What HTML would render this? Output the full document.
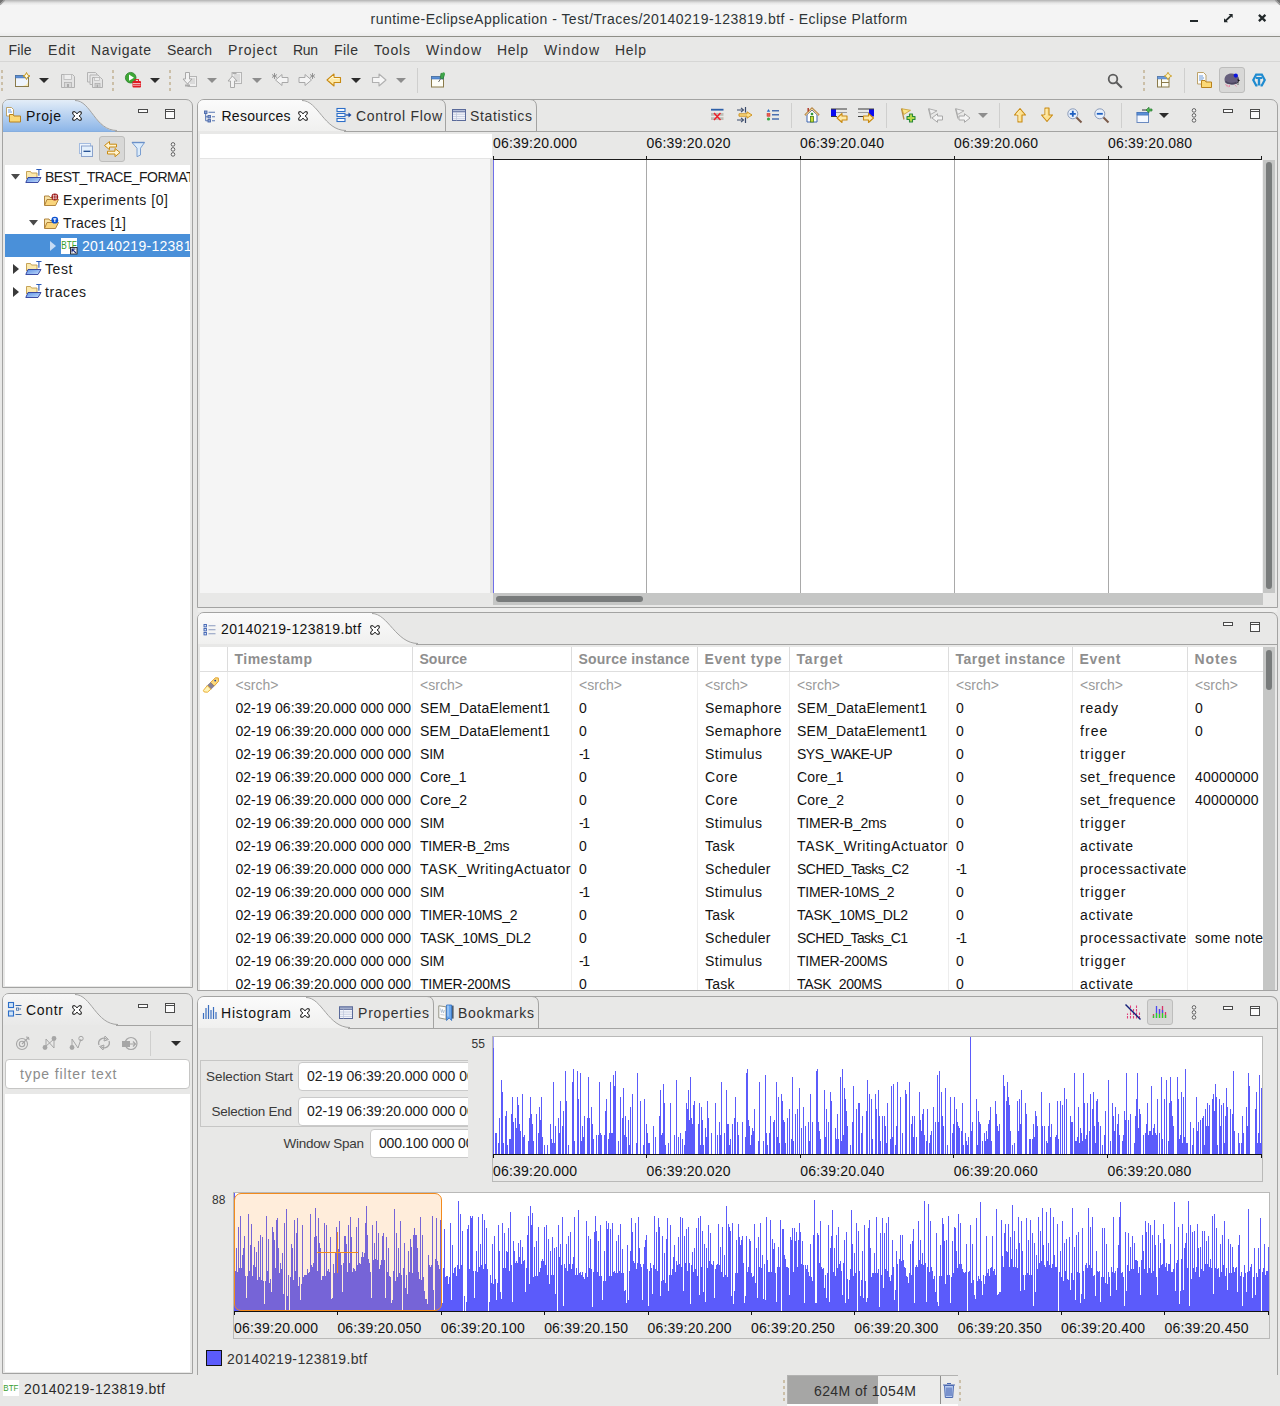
<!DOCTYPE html>
<html><head><meta charset="utf-8"><title>Eclipse</title>
<style>
*{box-sizing:border-box;margin:0;padding:0}
html,body{width:1280px;height:1406px;overflow:hidden;background:#e8e8e7;font-family:"Liberation Sans",sans-serif;font-size:14px;color:#1a1a1a}
.abs{position:absolute}
.t{position:absolute;white-space:nowrap;font-family:"Liberation Sans",sans-serif}
svg{position:absolute;overflow:visible}
</style></head><body>
<div class="abs" style="left:0;top:0;width:1280px;height:36px;background:linear-gradient(#b2b2b2 0,#cdcdcd 1.500px,#e6e6e6 3px,#f4f4f4 5.500px,#f4f4f4 32px,#ececec 36px)"></div>
<svg style="left:0px;top:0px" width="6" height="6" viewBox="0 0 6 6"><path d="M0 0h4L0 4z" fill="#727272"/><path d="M4.800 0L0 4.800" stroke="#9c9c9c" stroke-width="1.200"/></svg>
<svg style="left:1274px;top:0px" width="6" height="6" viewBox="0 0 6 6"><path d="M6 0H2l4 4z" fill="#727272"/><path d="M1.200 0L6 4.800" stroke="#9c9c9c" stroke-width="1.200"/></svg>
<div class="abs" style="left:0px;top:36px;width:1280px;height:1px;background:#8f8f88;"></div>
<div class="t" style="left:370.50px;top:11.00px;font-size:14.00px;line-height:16px;letter-spacing:0.474px;color:#2e3436;">runtime-EclipseApplication - Test/Traces/20140219-123819.btf - Eclipse Platform</div>
<div class="abs" style="left:1190px;top:19.5px;width:8px;height:2.5px;background:#22282a;"></div>
<svg style="left:1223.5px;top:13.7px" width="8.7" height="8.3" viewBox="0 0 8.7 8.3"><path d="M4.600 0H8.700v4.100zM4.100 8.300H0V4.200z" fill="#22282a"/><path d="M7 1.700L1.700 6.600" stroke="#22282a" stroke-width="1.900"/></svg>
<svg style="left:1257.7px;top:14px" width="8.3" height="8" viewBox="0 0 8.3 8"><path d="M.9 .9l6.500 6.200M7.400 .9L.9 7.100" stroke="#22282a" stroke-width="2.300"/></svg>
<div class="abs" style="left:0px;top:37px;width:1280px;height:25px;background:#e8e8e7;"></div>
<div class="abs" style="left:0px;top:61px;width:1280px;height:1px;background:#d6d6d5;"></div>
<div class="t" style="left:8.50px;top:42.00px;font-size:14.00px;line-height:16px;letter-spacing:0.147px;color:#333;">File</div>
<div class="t" style="left:48.00px;top:42.00px;font-size:14.00px;line-height:16px;letter-spacing:0.959px;color:#333;">Edit</div>
<div class="t" style="left:91.00px;top:42.00px;font-size:14.00px;line-height:16px;letter-spacing:0.678px;color:#333;">Navigate</div>
<div class="t" style="left:167.00px;top:42.00px;font-size:14.00px;line-height:16px;letter-spacing:0.129px;color:#333;">Search</div>
<div class="t" style="left:228.00px;top:42.00px;font-size:14.00px;line-height:16px;letter-spacing:0.905px;color:#333;">Project</div>
<div class="t" style="left:293.00px;top:42.00px;font-size:14.00px;line-height:16px;letter-spacing:-0.341px;color:#333;">Run</div>
<div class="t" style="left:334.00px;top:42.00px;font-size:14.00px;line-height:16px;letter-spacing:0.481px;color:#333;">File</div>
<div class="t" style="left:374.00px;top:42.00px;font-size:14.00px;line-height:16px;letter-spacing:0.830px;color:#333;">Tools</div>
<div class="t" style="left:426.00px;top:42.00px;font-size:14.00px;line-height:16px;letter-spacing:1.042px;color:#333;">Window</div>
<div class="t" style="left:497.00px;top:42.00px;font-size:14.00px;line-height:16px;letter-spacing:0.736px;color:#333;">Help</div>
<div class="t" style="left:544.00px;top:42.00px;font-size:14.00px;line-height:16px;letter-spacing:1.042px;color:#333;">Window</div>
<div class="t" style="left:615.00px;top:42.00px;font-size:14.00px;line-height:16px;letter-spacing:0.736px;color:#333;">Help</div>
<div class="abs" style="left:1px;top:70px;width:2px;height:22px;background:repeating-linear-gradient(#cbbfa8 0 3px,transparent 3px 6px)"></div>
<svg style="left:15px;top:72px" width="16" height="16" viewBox="0 0 16 16"><rect x=".5" y="3.500" width="13" height="11" fill="#eef4fd" stroke="#8a7a4a"/><path d="M13 9c0 3-3 5-7 5h7z" fill="#f6e9b8"/><rect x=".5" y="3.500" width="13" height="2.400" fill="#5a8fd6" stroke="#3f6fb5" stroke-width=".6"/><path d="M11.500 .5l1.100 2.400 2.400 1.100-2.400 1.100-1.100 2.400-1.100-2.400L8 4l2.400-1.100z" fill="#fffbe6" stroke="#c89a1e" stroke-width="1"/></svg>
<svg style="left:39px;top:78px" width="10" height="5" viewBox="0 0 10 5"><path d="M0 0H10L5 5Z" fill="#2b2b2b"/></svg>
<svg style="left:59.5px;top:72.5px" width="16" height="16" viewBox="0 0 16 16"><path d="M1.5 1.5h11l2 2v11h-13z" fill="#e4e4e4" stroke="#b0b0b0"/><rect x="4" y="1.5" width="7.5" height="5" fill="#eee" stroke="#b8b8b8" stroke-width=".8"/><rect x="4.5" y="9.5" width="7" height="5" fill="#d8d8d8" stroke="#b0b0b0" stroke-width=".8"/><rect x="7" y="11" width="2" height="3" fill="#aaa"/></svg>
<svg style="left:87px;top:72px" width="16" height="16" viewBox="0 0 16 16"><path d="M.5 .5h8l1.5 1.5v8h-9.5z" fill="#e8e8e8" stroke="#b4b4b4"/><path d="M3 3h8l1.5 1.5v8H3z" fill="#e8e8e8" stroke="#b4b4b4"/><path d="M5.5 5.500h8l2 2v8h-10z" fill="#e4e4e4" stroke="#b0b0b0"/><rect x="7.5" y="5.5" width="5" height="3" fill="#eee" stroke="#b8b8b8" stroke-width=".7"/><rect x="8" y="11.5" width="5" height="4" fill="#d5d5d5" stroke="#aaa" stroke-width=".7"/><rect x="9.6" y="12.6" width="1.6" height="2.6" fill="#a8a8a8"/></svg>
<div class="abs" style="left:112px;top:70px;width:2px;height:22px;background:repeating-linear-gradient(#cbbfa8 0 3px,transparent 3px 6px)"></div>
<svg style="left:125px;top:72px" width="16" height="16" viewBox="0 0 16 16"><circle cx="5.7" cy="5.7" r="5.3" fill="#3ea836" stroke="#2b7d2b" stroke-width=".8"/><path d="M4 2.6v6.2l5-3.100z" fill="#fff"/><rect x="7.500" y="9" width="8.5" height="6.5" rx="1" fill="#e01b24"/><rect x="10" y="7.600" width="3.500" height="2" fill="none" stroke="#e01b24" stroke-width="1"/><rect x="8" y="11.200" width="7.5" height="1" fill="#fff" opacity=".85"/><rect x="8" y="13.200" width="7.5" height=".8" fill="#fff" opacity=".6"/></svg>
<svg style="left:150px;top:78px" width="10" height="5" viewBox="0 0 10 5"><path d="M0 0H10L5 5Z" fill="#2b2b2b"/></svg>
<div class="abs" style="left:169px;top:70px;width:2px;height:22px;background:repeating-linear-gradient(#cbbfa8 0 3px,transparent 3px 6px)"></div>
<svg style="left:182px;top:72px" width="16" height="16" viewBox="0 0 16 16"><rect x="6" y="4.500" width="8.5" height="10" fill="#efefef" stroke="#b5b5b5"/><path d="M8 7h5M8 9h5M8 11h5" stroke="#bdbdbd" stroke-width=".8"/><path d="M3.500 .5h4v6.500h2.500L5.500 12 1 7h2.500z" fill="#f2f2f2" stroke="#a9a9a9"/><rect x="3" y="12.500" width="5" height="2" fill="#aaa"/></svg>
<svg style="left:207px;top:78px" width="10" height="5" viewBox="0 0 10 5"><path d="M0 0H10L5 5Z" fill="#8d8d8d"/></svg>
<svg style="left:227px;top:72px" width="16" height="16" viewBox="0 0 16 16"><rect x="5" y=".5" width="9.5" height="11" fill="#efefef" stroke="#b5b5b5"/><path d="M7 3h6M7 5h6M7 7h6M9 9h4" stroke="#bdbdbd" stroke-width=".8"/><path d="M3.500 15.500h4V9h2.500L5.500 4 1 9h2.500z" fill="#f2f2f2" stroke="#a9a9a9"/><rect x="5.500" y=".5" width="4" height="1.600" fill="#aaa"/></svg>
<svg style="left:252px;top:78px" width="10" height="5" viewBox="0 0 10 5"><path d="M0 0H10L5 5Z" fill="#8d8d8d"/></svg>
<svg style="left:272px;top:72px" width="16" height="16" viewBox="0 0 16 16"><path d="M16 5.500h-6V2.500L3.500 8l6.500 5.500v-3h6z" fill="#f4f4f4" stroke="#a8a8a8"/><path d="M2.500 1v6M0 2.500l5 3M5 2.500l-5 3" stroke="#8c8c8c" stroke-width=".9"/></svg>
<svg style="left:299px;top:72px" width="16" height="16" viewBox="0 0 16 16"><path d="M0 5.500h6V2.500L12.500 8 6 13.500v-3H0z" fill="#f4f4f4" stroke="#a8a8a8"/><path d="M13.500 1v6M11 2.500l5 3M16 2.500l-5 3" stroke="#8c8c8c" stroke-width=".9"/></svg>
<svg style="left:326px;top:72px" width="16" height="16" viewBox="0 0 16 16"><path d="M14.500 5.500H8V2L1 8l7 6v-3.500h6.500z" fill="#fde9a8" stroke="#c98a12" stroke-width="1.100" stroke-linejoin="round"/><path d="M13.500 6.500H7V4.200L2.600 8" fill="none" stroke="#fff7d8" stroke-width=".9"/></svg>
<svg style="left:351px;top:78px" width="10" height="5" viewBox="0 0 10 5"><path d="M0 0H10L5 5Z" fill="#2b2b2b"/></svg>
<svg style="left:371px;top:72px" width="16" height="16" viewBox="0 0 16 16"><path d="M1.500 5.500H8V2l7 6-7 6v-3.500H1.500z" fill="#f6f6f6" stroke="#b0b0b0" stroke-width="1.100" stroke-linejoin="round"/></svg>
<svg style="left:396px;top:78px" width="10" height="5" viewBox="0 0 10 5"><path d="M0 0H10L5 5Z" fill="#8d8d8d"/></svg>
<div class="abs" style="left:417px;top:68px;width:1px;height:25px;background:#cfcfce;"></div>
<svg style="left:430px;top:72px" width="16" height="16" viewBox="0 0 16 16"><rect x="1.500" y="4.500" width="12" height="10.500" fill="#fdfdf6" stroke="#8a7a4a"/><rect x="1.500" y="4.500" width="12" height="2.500" fill="#5a8fd6" stroke="#3f6fb5" stroke-width=".6"/><path d="M11 1.200l3.500 1.300L13 7l-2.800-.8z" fill="#3fa64a" stroke="#2a7a33" stroke-width=".7"/><path d="M10.800 6.500L8.500 10" stroke="#666" stroke-width="1"/><circle cx="13.500" cy="1.800" r="1.500" fill="#3fa64a"/></svg>
<svg style="left:1107px;top:73px" width="16" height="16" viewBox="0 0 16 16"><circle cx="6" cy="6" r="4.300" fill="none" stroke="#5c5c5c" stroke-width="1.800"/><path d="M9.300 9.300L14.800 14.800" stroke="#5c5c5c" stroke-width="2.100"/></svg>
<div class="abs" style="left:1143px;top:70px;width:2px;height:22px;background:repeating-linear-gradient(#cbbfa8 0 3px,transparent 3px 6px)"></div>
<svg style="left:1156px;top:72px" width="16" height="16" viewBox="0 0 16 16"><rect x="1.500" y="4.500" width="11.500" height="10.500" fill="#fbfbf2" stroke="#8a7a4a"/><rect x="1.500" y="4.500" width="11.500" height="2.400" fill="#6a9bdc" stroke="#4a78bd" stroke-width=".6"/><path d="M5.500 7v8M5.500 10.500H13" stroke="#8a7a4a" stroke-width="1"/><path d="M12 .3l1.300 2.400 2.400 1.300-2.400 1.300L12 7.700l-1.300-2.400L8.300 4l2.400-1.300z" fill="#fff4c0" stroke="#c89a1e" stroke-width=".9"/></svg>
<div class="abs" style="left:1184px;top:68px;width:1px;height:25px;background:#cfcfce;"></div>
<svg style="left:1196px;top:72px" width="16" height="16" viewBox="0 0 16 16"><path d="M1.500 .5h6l2.500 2.500v9h-8.500z" fill="#fcfcfc" stroke="#b79a5a" stroke-width=".9"/><path d="M3 4h4M3 6h5M3 8h4" stroke="#5a8fd6" stroke-width=".9"/><path d="M5.500 8.500h3.500l1 1.500h5.500v5.500h-10z" fill="#fbd977" stroke="#b9821d" stroke-width="1" stroke-linejoin="round"/></svg>
<div class="abs" style="left:1219px;top:67px;width:26px;height:26px;background:#d8d8d7;border:1px solid #bdbdbc;border-radius:3px"></div>
<svg style="left:1224px;top:72px" width="16" height="16" viewBox="0 0 16 16"><path d="M.5 7.500C.5 3.500 4 1.200 8 1.500c4 .3 6.500 2.500 7 5 .4 2.300-.5 4.200-2.500 5.200-2 .9-6 1-8.500 .3C1.800 11.400.5 10 .5 7.500z" fill="#665f7c"/><path d="M1.500 9.500c2.500 2.300 7.500 2.800 11 1" stroke="#4a445e" stroke-width="1.600" fill="none"/><circle cx="11.800" cy="3.600" r="2.100" fill="#0a14e0"/><path d="M13.500 7l2.500 1.200-2 1.800z" fill="#111"/><path d="M13 10.500l2 .5M13 11.500l1.500 1.500" stroke="#222" stroke-width=".7"/><path d="M1.500 12l1.500 2.500M3.500 12.800l.8 2.400M5.500 13l0 2" stroke="#e88aa8" stroke-width=".9"/><path d="M11 12.800l1.500 1.800" stroke="#e88aa8" stroke-width=".9"/></svg>
<svg style="left:1251px;top:72px" width="16" height="16" viewBox="0 0 16 16"><path d="M4.500 1.500h7L15 8l-3.500 6.500h-2v-2.300h.7L12.500 8l-2.300-4.200H5.800L3.500 8l2.300 4.200h.7v2.300h-2L1 8z" fill="#1f8bd0"/><path d="M4.800 5h6.400v2H9.200v6.500H6.800V7h-2z" fill="#1f8bd0"/></svg>
<div class="abs" style="left:2px;top:99px;width:191px;height:889px;border:1px solid #a3a3a2;border-radius:7px 7px 0 0;background:#e8e8e7"></div>
<svg style="left:0;top:0" width="1280" height="1406"><defs><linearGradient id="gProj" x1="0" y1="0" x2="0" y2="1"><stop offset="0" stop-color="#e3edf8"/><stop offset="1" stop-color="#8db6e8"/></linearGradient></defs><path d="M3 131 V106 Q3 100 9 100 H75 C91 100 95 131 117 131 Z" fill="url(#gProj)"/><path d="M75 100.5 C91 100.5 95 130.5 117 130.5" fill="none" stroke="#a3a3a2" stroke-width="1"/></svg>
<div class="abs" style="left:3px;top:131px;width:113px;height:1px;background:#86aedf;"></div>
<div class="abs" style="left:115px;top:131px;width:77px;height:1px;background:#a3a3a2;"></div>
<svg style="left:6px;top:107px" width="16" height="16" viewBox="0 0 16 16"><path d="M.5 .5h5l2 2v6.500h-7z" fill="#fff" stroke="#b79a5a" stroke-width=".9"/><path d="M2 3h3M2 5h4" stroke="#5a8fd6" stroke-width=".9"/><path d="M3.500 7.500h3.500l1 1.500h6.500v6h-11z" fill="#fbd977" stroke="#b9821d" stroke-width="1" stroke-linejoin="round"/></svg>
<div class="t" style="left:26.00px;top:108.00px;font-size:14.00px;line-height:16px;letter-spacing:0.580px;color:#111;">Proje</div>
<svg style="left:72px;top:111px" width="10" height="10" viewBox="0 0 10 10"><path d="M.8 .8h2.400L5 2.900 6.800 .8h2.400v2.400L7.100 5l2.100 1.800v2.400H6.800L5 7.100 3.200 9.200H.8V6.800L2.900 5 .8 3.200z" fill="#fdfdfd" stroke="#111" stroke-width="1" stroke-linejoin="miter"/></svg>
<svg style="left:138px;top:109px" width="10" height="4" viewBox="0 0 10 4"><rect x=".5" y=".5" width="9" height="3" fill="#fbfbfb" stroke="#4a4a4a" stroke-width="1"/></svg>
<svg style="left:165px;top:108.5px" width="10" height="10" viewBox="0 0 10 10"><rect x=".5" y=".5" width="9" height="9" fill="#fbfbfb" stroke="#4a4a4a" stroke-width="1"/><path d="M.5 2.500h9" stroke="#4a4a4a" stroke-width="1"/></svg>
<svg style="left:78px;top:141.5px" width="16" height="16" viewBox="0 0 16 16"><rect x="1.500" y="1.500" width="11" height="10" fill="#eef5fd" stroke="#a4bce0" stroke-width="1"/><rect x="3.500" y="4" width="11" height="10.500" fill="#e4f0fc" stroke="#8aa2cc" stroke-width="1"/><path d="M5.500 9.300h7" stroke="#1e4a90" stroke-width="1.300"/></svg>
<div class="abs" style="left:99px;top:136px;width:26px;height:26px;background:#d8d8d7;border:1px solid #bdbdbc;border-radius:3px"></div>
<svg style="left:104px;top:141px" width="16" height="16" viewBox="0 0 16 16"><path d="M.5 4.500L5.500 .5V3.200H12.500V6H5.500V8.700z" fill="#fff3cf" stroke="#c98a12" stroke-width="1" stroke-linejoin="round"/><path d="M16 11.500L11 7.500v2.700H3.500V13H11v2.700z" fill="#fff3cf" stroke="#c98a12" stroke-width="1" stroke-linejoin="round"/></svg>
<svg style="left:131px;top:141px" width="16" height="16" viewBox="0 0 16 16"><path d="M1 1.500h12.500L9.500 7.200V14l-3.500 1.700V7.200z" fill="#dcecfb" stroke="#7a9ed0" stroke-width="1" stroke-linejoin="round"/><path d="M1 1.500h12.500" stroke="#6a90c8" stroke-width="1.400"/></svg>
<svg style="left:170px;top:142px" width="6" height="16" viewBox="0 0 6 16"><circle cx="3" cy="2.400" r="1.800" fill="#f4f4f4" stroke="#555" stroke-width=".9"/><circle cx="3" cy="7.400" r="1.800" fill="#f4f4f4" stroke="#555" stroke-width=".9"/><circle cx="3" cy="12.400" r="1.800" fill="#f4f4f4" stroke="#555" stroke-width=".9"/></svg>
<div class="abs" style="left:5px;top:165px;width:185px;height:821px;background:#fff;"></div>
<div class="abs" style="left:5px;top:165px;width:185px;height:821px;overflow:hidden">
<div class="abs" style="left:0px;top:69px;width:185px;height:23px;background:#4a90d9;"></div>
<svg style="left:6px;top:8.5px" width="9" height="5.5" viewBox="0 0 9 5.5"><path d="M0 0h9L4.500 5.500z" fill="#4a4a4a"/></svg>
<svg style="left:20px;top:3px" width="16" height="16" viewBox="0 0 16 16"><defs><linearGradient id="fb" x1="0" y1="0" x2="1" y2="1"><stop offset="0" stop-color="#5a90e6"/><stop offset="1" stop-color="#c4dcfa"/></linearGradient></defs><path d="M1.500 11V3.500h4l1 1.500h5.500v4.500" fill="#fbe9ac" stroke="#c09a4a" stroke-width=".9" stroke-linejoin="round"/><path d="M3 9.500h13l-3 5H.8z" fill="url(#fb)" stroke="#2a3a9a" stroke-width=".9" stroke-linejoin="round"/><path d="M11.300 1.500h5.200M13.900 1.500v6.200" stroke="#2a5ab8" stroke-width="1.100"/></svg>
<div class="t" style="left:40.00px;top:4.00px;font-size:14.00px;line-height:16px;letter-spacing:-0.509px;color:#1a1a1a;">BEST_TRACE_FORMAT</div>
<svg style="left:38px;top:26px" width="16" height="16" viewBox="0 0 16 16"><path d="M1.500 14V5h4.500l1 1.500h5v2" fill="#f7e3a8" stroke="#a87830" stroke-width=".9" stroke-linejoin="round"/><path d="M1.500 14.500L4 8.500h11.500l-3 6z" fill="#f9d57c" stroke="#a87830" stroke-width=".9" stroke-linejoin="round"/><circle cx="11.800" cy="6" r="3.400" fill="#9a1414"/><path d="M9.600 4.800h4.400M9.600 7.200h4.400M10.600 3.500v5M13 3.500v5" stroke="#fff" stroke-width=".6"/></svg>
<div class="t" style="left:58.00px;top:27.00px;font-size:14.00px;line-height:16px;letter-spacing:0.553px;color:#1a1a1a;">Experiments [0]</div>
<svg style="left:24px;top:54.5px" width="9" height="5.5" viewBox="0 0 9 5.5"><path d="M0 0h9L4.500 5.500z" fill="#4a4a4a"/></svg>
<svg style="left:38px;top:49px" width="16" height="16" viewBox="0 0 16 16"><path d="M1.500 14V5h4.500l1 1.500h5v2" fill="#f7e3a8" stroke="#a87830" stroke-width=".9" stroke-linejoin="round"/><path d="M1.500 14.500L4 8.500h11.500l-3 6z" fill="#f9d57c" stroke="#a87830" stroke-width=".9" stroke-linejoin="round"/><circle cx="11.800" cy="6.200" r="3.400" fill="#0a50d0"/><path d="M10.300 4.900h3M11.800 4.900v3" stroke="#fff" stroke-width="1.100"/></svg>
<div class="t" style="left:58.00px;top:50.00px;font-size:14.00px;line-height:16px;letter-spacing:0.142px;color:#1a1a1a;">Traces [1]</div>
<svg style="left:45px;top:76px" width="6" height="10" viewBox="0 0 6 10"><path d="M0 0v10l6-5z" fill="#c8dcf4"/></svg>
<svg style="left:56px;top:73px" width="16" height="16" viewBox="0 0 16 16"><rect x="0" y="0" width="16" height="16" fill="#fff"/><text x=".2" y="11" font-family="Liberation Sans" font-size="10.500" fill="#34a02a" textLength="15.600" lengthAdjust="spacingAndGlyphs">BTF</text><rect x="9.500" y="9.500" width="6.500" height="6.500" fill="#fff" stroke="#222" stroke-width=".9"/><path d="M11 14.500v-3.500h3.500M11.300 11.300l3.700 3.700" stroke="#1a2a7a" stroke-width="1.100" fill="none"/></svg>
<div class="t" style="left:77.00px;top:73.00px;font-size:14.00px;line-height:16px;letter-spacing:0.272px;color:#fff;">20140219-123819.btf</div>
<svg style="left:8px;top:99px" width="6" height="10" viewBox="0 0 6 10"><path d="M0 0v10l6-5z" fill="#3a3a3a"/></svg>
<svg style="left:20px;top:95px" width="16" height="16" viewBox="0 0 16 16"><defs><linearGradient id="fb" x1="0" y1="0" x2="1" y2="1"><stop offset="0" stop-color="#5a90e6"/><stop offset="1" stop-color="#c4dcfa"/></linearGradient></defs><path d="M1.500 11V3.500h4l1 1.500h5.500v4.500" fill="#fbe9ac" stroke="#c09a4a" stroke-width=".9" stroke-linejoin="round"/><path d="M3 9.500h13l-3 5H.8z" fill="url(#fb)" stroke="#2a3a9a" stroke-width=".9" stroke-linejoin="round"/><path d="M11.300 1.500h5.200M13.900 1.500v6.200" stroke="#2a5ab8" stroke-width="1.100"/></svg>
<div class="t" style="left:40.00px;top:96.00px;font-size:14.00px;line-height:16px;letter-spacing:0.608px;color:#1a1a1a;">Test</div>
<svg style="left:8px;top:122px" width="6" height="10" viewBox="0 0 6 10"><path d="M0 0v10l6-5z" fill="#3a3a3a"/></svg>
<svg style="left:20px;top:118px" width="16" height="16" viewBox="0 0 16 16"><defs><linearGradient id="fb" x1="0" y1="0" x2="1" y2="1"><stop offset="0" stop-color="#5a90e6"/><stop offset="1" stop-color="#c4dcfa"/></linearGradient></defs><path d="M1.500 11V3.500h4l1 1.500h5.500v4.500" fill="#fbe9ac" stroke="#c09a4a" stroke-width=".9" stroke-linejoin="round"/><path d="M3 9.500h13l-3 5H.8z" fill="url(#fb)" stroke="#2a3a9a" stroke-width=".9" stroke-linejoin="round"/><path d="M11.300 1.500h5.200M13.900 1.500v6.200" stroke="#2a5ab8" stroke-width="1.100"/></svg>
<div class="t" style="left:40.00px;top:119.00px;font-size:14.00px;line-height:16px;letter-spacing:0.576px;color:#1a1a1a;">traces</div>
</div>
<div class="abs" style="left:2px;top:993px;width:191px;height:381px;border:1px solid #a3a3a2;border-radius:7px 7px 0 0;background:#e8e8e7"></div>
<svg style="left:0;top:0" width="1280" height="1406"><defs><linearGradient id="gCtl" x1="0" y1="0" x2="0" y2="1"><stop offset="0" stop-color="#f6f6f6"/><stop offset="1" stop-color="#e9e9e8"/></linearGradient></defs><path d="M3 1025 V1000 Q3 994 9 994 H75 C91 994 96 1025 118 1025 Z" fill="url(#gCtl)"/><path d="M75 994.5 C91 994.5 96 1024.5 118 1024.5" fill="none" stroke="#a3a3a2" stroke-width="1"/></svg>
<div class="abs" style="left:116px;top:1025px;width:76px;height:1px;background:#a3a3a2;"></div>
<svg style="left:7px;top:1001px" width="16" height="16" viewBox="0 0 16 16"><rect x="1.500" y="1.500" width="5" height="5" fill="#cfe4f8" stroke="#2d6ec8" stroke-width="1.100"/><rect x="1.500" y="10" width="5" height="5" fill="#cfe4f8" stroke="#2d6ec8" stroke-width="1.100"/><path d="M8.500 4.500h6M8.500 13.500h6" stroke="#3a6aa8" stroke-width="1.200"/><rect x="9.500" y="7" width="2.200" height="2.200" fill="#fff" stroke="#3a6aa8" stroke-width=".8"/><path d="M12.500 8h1.500" stroke="#3a6aa8" stroke-width="1"/></svg>
<div class="t" style="left:26.00px;top:1002.00px;font-size:14.00px;line-height:16px;letter-spacing:0.692px;color:#111;">Contr</div>
<svg style="left:72px;top:1005px" width="10" height="10" viewBox="0 0 10 10"><path d="M.8 .8h2.400L5 2.900 6.800 .8h2.400v2.400L7.100 5l2.100 1.800v2.400H6.800L5 7.100 3.200 9.200H.8V6.800L2.900 5 .8 3.200z" fill="#fdfdfd" stroke="#111" stroke-width="1" stroke-linejoin="miter"/></svg>
<svg style="left:138px;top:1003.5px" width="10" height="4" viewBox="0 0 10 4"><rect x=".5" y=".5" width="9" height="3" fill="#fbfbfb" stroke="#4a4a4a" stroke-width="1"/></svg>
<svg style="left:165px;top:1003px" width="10" height="10" viewBox="0 0 10 10"><rect x=".5" y=".5" width="9" height="9" fill="#fbfbfb" stroke="#4a4a4a" stroke-width="1"/><path d="M.5 2.500h9" stroke="#4a4a4a" stroke-width="1"/></svg>
<svg style="left:15px;top:1035px" width="16" height="16" viewBox="0 0 16 16"><circle cx="7" cy="9" r="5.500" fill="none" stroke="#a6a6a6" stroke-width="1.100"/><circle cx="7" cy="9" r="2.700" fill="none" stroke="#a6a6a6" stroke-width="1.100"/><path d="M7 9l6-6M11 2l2.500 .5.500 2.500" stroke="#a6a6a6" stroke-width="1.100" fill="none"/></svg>
<svg style="left:42px;top:1035px" width="16" height="16" viewBox="0 0 16 16"><circle cx="3" cy="12.500" r="2.400" fill="#a6a6a6"/><circle cx="12" cy="3.500" r="2.400" fill="#a6a6a6"/><path d="M3 12l9-8M4 4l8 9M4 4v9M12 4v9" stroke="#a6a6a6" stroke-width="1"/></svg>
<svg style="left:69px;top:1035px" width="16" height="16" viewBox="0 0 16 16"><circle cx="3" cy="12.500" r="2.400" fill="#a6a6a6"/><circle cx="12" cy="3.500" r="2.200" fill="none" stroke="#a6a6a6"/><path d="M3 12V4l6 9 3-9" stroke="#a6a6a6" stroke-width="1" fill="none"/></svg>
<svg style="left:96px;top:1035px" width="16" height="16" viewBox="0 0 16 16"><path d="M3 10a5 5 0 0 1 8-5.500M13 6a5 5 0 0 1-8 5.500" stroke="#a6a6a6" stroke-width="1.300" fill="none"/><path d="M9 1l3.500 3.500L8 6zM7 15l-3.500-3.500L8 10z" fill="none" stroke="#a6a6a6" stroke-width="1"/></svg>
<svg style="left:122px;top:1035px" width="16" height="16" viewBox="0 0 16 16"><circle cx="9" cy="8.500" r="6" fill="none" stroke="#a6a6a6" stroke-width="1.200"/><rect x="0" y="6" width="8" height="6" fill="#a6a6a6"/><path d="M8 9h5M11 6.500l2.500 2.500L11 11.500" stroke="#a6a6a6" stroke-width="1.200" fill="none"/></svg>
<div class="abs" style="left:150px;top:1031px;width:1px;height:25px;background:#cfcfce;"></div>
<svg style="left:171px;top:1041px" width="10" height="5" viewBox="0 0 10 5"><path d="M0 0H10L5 5Z" fill="#2b2b2b"/></svg>
<div class="abs" style="left:5px;top:1059px;width:185px;height:30px;background:#fff;border:1px solid #c6c6c5;border-radius:4px"></div>
<div class="t" style="left:20.00px;top:1066.00px;font-size:14.00px;line-height:16px;letter-spacing:0.883px;color:#8c8c8c;">type filter text</div>
<div class="abs" style="left:5px;top:1094px;width:185px;height:278px;background:#fff;"></div>
<div class="abs" style="left:197px;top:99px;width:1081px;height:509px;border:1px solid #a3a3a2;border-radius:7px 7px 0 0;background:#e8e8e7"></div>
<svg style="left:0;top:0" width="1280" height="1406"><defs><linearGradient id="gRes" x1="0" y1="0" x2="0" y2="1"><stop offset="0" stop-color="#fbfbfb"/><stop offset="1" stop-color="#f0f0ef"/></linearGradient></defs><path d="M198 131 V106 Q198 100 204 100 H302 C318 100 324 131 346 131 Z" fill="url(#gRes)"/><path d="M302 100.5 C318 100.5 324 130.5 346 130.5" fill="none" stroke="#a3a3a2" stroke-width="1"/></svg>
<div class="abs" style="left:344px;top:131px;width:933px;height:1px;background:#a3a3a2;"></div>
<svg style="left:0;top:0" width="1280" height="1406"><path d="M305 99.5 H439 Q445.5 99.5 445.5 107 V131" fill="none" stroke="#a3a3a2" stroke-width="1"/></svg>
<svg style="left:0;top:0" width="1280" height="1406"><path d="M446 99.5 H530 Q536.5 99.5 536.5 107 V131" fill="none" stroke="#a3a3a2" stroke-width="1"/></svg>
<svg style="left:203px;top:109px" width="16" height="16" viewBox="0 0 16 16"><path d="M2.700 4.500V11.800H5M2.700 7.800H5" stroke="#5070b0" stroke-width="1" fill="none"/><rect x="1.500" y="2" width="2.500" height="2.500" fill="#8aa2d4" stroke="#4a68a8" stroke-width=".9"/><rect x="5" y="6.500" width="2.500" height="2.500" fill="#8aa2d4" stroke="#4a68a8" stroke-width=".9"/><rect x="5" y="10.500" width="2.500" height="2.500" fill="#8aa2d4" stroke="#4a68a8" stroke-width=".9"/><path d="M5.500 3.300H12M9 7.800h3M9 11.800h3" stroke="#5a78b4" stroke-width="1.100"/></svg>
<div class="t" style="left:221.50px;top:108.00px;font-size:14.00px;line-height:16px;letter-spacing:0.261px;color:#111;">Resources</div>
<svg style="left:297.5px;top:111px" width="10" height="10" viewBox="0 0 10 10"><path d="M.8 .8h2.400L5 2.900 6.800 .8h2.400v2.400L7.100 5l2.100 1.800v2.400H6.800L5 7.100 3.200 9.200H.8V6.800L2.900 5 .8 3.200z" fill="#fdfdfd" stroke="#111" stroke-width="1" stroke-linejoin="miter"/></svg>
<svg style="left:336px;top:107px" width="16" height="16" viewBox="0 0 16 16"><rect x="1" y="1.500" width="8" height="3" fill="#fff" stroke="#2d6ec8" stroke-width="1.100"/><rect x="1" y="6.500" width="8" height="3" fill="#fff" stroke="#2d6ec8" stroke-width="1.100"/><rect x="1" y="11.500" width="8" height="3" fill="#fff" stroke="#2d6ec8" stroke-width="1.100"/><path d="M9.500 8h4" stroke="#1e4fa8" stroke-width="1.300"/><path d="M12.500 5.500L15.500 8l-3 2.500z" fill="#1e4fa8"/></svg>
<div class="t" style="left:356.00px;top:108.00px;font-size:14.00px;line-height:16px;letter-spacing:0.675px;color:#333;">Control Flow</div>
<svg style="left:452px;top:107px" width="16" height="16" viewBox="0 0 16 16"><rect x=".5" y="2.500" width="13" height="11" fill="#f2f4fa" stroke="#5a6a9a" stroke-width="1"/><rect x=".5" y="2.500" width="13" height="2.300" fill="#b4bed8" stroke="#5a6a9a" stroke-width="1"/><path d="M1 7.300h12M1 9.500h12M1 11.700h12M4.500 5v8.500" stroke="#bcc4da" stroke-width=".7"/></svg>
<div class="t" style="left:470.00px;top:108.00px;font-size:14.00px;line-height:16px;letter-spacing:0.665px;color:#333;">Statistics</div>
<svg style="left:710px;top:107px" width="16" height="16" viewBox="0 0 16 16"><path d="M1 2.700h12.500" stroke="#2d5fa8" stroke-width="1.800"/><rect x="1" y="6" width="12.500" height="2.800" fill="#bdbdb6"/><rect x="1" y="10.200" width="12.500" height="2.800" fill="#bdbdb6"/><path d="M4 6l6.500 7M10.500 6l-6.500 7" stroke="#f01e28" stroke-width="1.400"/></svg>
<svg style="left:737px;top:107px" width="16" height="16" viewBox="0 0 16 16"><path d="M0 3h6M0 13h6" stroke="#3a4a6a" stroke-width="1.100"/><path d="M4 .8L6.500 3 4 5.200M4 10.800L6.500 13 4 15.200" stroke="#3a4a6a" stroke-width="1.100" fill="none"/><path d="M8.500 0v5.500M8.500 10.500V16" stroke="#3a4a6a" stroke-width="1.200"/><path d="M2 6.800h8V4.800L15 8l-5 3.200V9.200H2z" fill="#fde08a" stroke="#c98a12" stroke-width=".9"/></svg>
<svg style="left:764.5px;top:107px" width="16" height="16" viewBox="0 0 16 16"><path d="M3.500 2l1.700 2.800H1.800z" fill="#2d6ec8"/><rect x="2" y="6.300" width="3" height="3" fill="#ea5a50" stroke="#c83a30" stroke-width=".5"/><circle cx="3.500" cy="12" r="1.600" fill="#39a845"/><path d="M7 3.700h7M7 7.800h7M7 11.900h7" stroke="#4a6eb0" stroke-width="1.500"/></svg>
<div class="abs" style="left:791px;top:103px;width:1px;height:25px;background:#cfcfce;"></div>
<svg style="left:804px;top:107px" width="16" height="16" viewBox="0 0 16 16"><path d="M3 7.500V15h10V7.500L8 3z" fill="#fff" stroke="#3f66b0" stroke-width="1"/><path d="M1 8.200l7-6.700 7 6.700" fill="none" stroke="#b98a4a" stroke-width="2"/><path d="M1.600 8l6.400-6 6.400 6" fill="none" stroke="#f6e2b0" stroke-width=".9"/><rect x="6.500" y="9.500" width="3" height="5.500" fill="#c8dc32" stroke="#4a7a1e" stroke-width=".8"/><rect x="6.800" y="5.800" width="2.400" height="2.400" fill="#2f9a3a"/><path d="M4.200 1v3.500" stroke="#b0392b" stroke-width="1.500"/></svg>
<svg style="left:831px;top:107px" width="16" height="16" viewBox="0 0 16 16"><rect x="0" y="2" width="5" height="7.500" fill="#0a0af0"/><path d="M0 2h16" stroke="#3a3a3a" stroke-width="1"/><path d="M5 5.500h11" stroke="#9a9a9a" stroke-width="1"/><path d="M0 9.500h6" stroke="#3a3a3a" stroke-width="1"/><path d="M16 9h-5V6.500l-5 4.500 5 4.500V13h5z" fill="#fde9a8" stroke="#c98a12" stroke-width="1.100" stroke-linejoin="round"/></svg>
<svg style="left:858px;top:107px" width="16" height="16" viewBox="0 0 16 16"><rect x="11" y="2" width="5" height="7.500" fill="#0a0af0"/><path d="M0 2h16" stroke="#3a3a3a" stroke-width="1"/><path d="M0 5.500h11" stroke="#9a9a9a" stroke-width="1"/><path d="M0 9.500h6" stroke="#3a3a3a" stroke-width="1"/><path d="M5.500 9h5V6.500l5 4.500-5 4.500V13h-5z" fill="#fde9a8" stroke="#c98a12" stroke-width="1.100" stroke-linejoin="round"/></svg>
<div class="abs" style="left:886px;top:103px;width:1px;height:25px;background:#cfcfce;"></div>
<svg style="left:900px;top:107px" width="16" height="16" viewBox="0 0 16 16"><path d="M1.500 1.500l2.500 11" stroke="#b58a48" stroke-width="1.300"/><path d="M2 1.800l8.500 1.500-6.800 4.200z" fill="#fbe58a" stroke="#c89a28" stroke-width=".8" stroke-linejoin="round"/><path d="M9.500 7h3v2.500H15v3h-2.500V15h-3v-2.500H7v-3h2.500z" fill="#b6d94a" stroke="#2a8a3a" stroke-width="1.100" stroke-linejoin="round"/></svg>
<svg style="left:927px;top:107px" width="16" height="16" viewBox="0 0 16 16"><path d="M1.500 1.500l2.500 10" stroke="#a8a8a8" stroke-width="1.200"/><path d="M2 1.800l8 2-6.500 3.700z" fill="#efefef" stroke="#a8a8a8" stroke-width=".9" stroke-linejoin="round"/><path d="M15.500 9h-5V6.700L5 11l5.500 4.300V13h5z" fill="#f4f4f4" stroke="#a8a8a8" stroke-width="1" stroke-linejoin="round"/></svg>
<svg style="left:954px;top:107px" width="16" height="16" viewBox="0 0 16 16"><path d="M1.500 1.500l2.500 10" stroke="#a8a8a8" stroke-width="1.200"/><path d="M2 1.800l8 2-6.500 3.700z" fill="#efefef" stroke="#a8a8a8" stroke-width=".9" stroke-linejoin="round"/><path d="M5 9h5.500V6.700L16 11l-5.500 4.300V13H5z" fill="#f4f4f4" stroke="#a8a8a8" stroke-width="1" stroke-linejoin="round"/></svg>
<svg style="left:978px;top:113px" width="10" height="5" viewBox="0 0 10 5"><path d="M0 0H10L5 5Z" fill="#8d8d8d"/></svg>
<div class="abs" style="left:999px;top:103px;width:1px;height:25px;background:#cfcfce;"></div>
<svg style="left:1013px;top:107px" width="16" height="16" viewBox="0 0 16 16"><path d="M5 15V8H1.500L7 1.500 12.500 8H9v7z" fill="#fde293" stroke="#c98a12" stroke-width="1.100" stroke-linejoin="round"/><path d="M6 14V7.200H3.600L7 3.200" fill="none" stroke="#fff3c4" stroke-width=".9"/></svg>
<svg style="left:1040px;top:107px" width="16" height="16" viewBox="0 0 16 16"><path d="M5 1v7H1.500L7 14.500 12.500 8H9V1z" fill="#fde293" stroke="#c98a12" stroke-width="1.100" stroke-linejoin="round"/><path d="M6 2v6.800H3.800" fill="none" stroke="#fff3c4" stroke-width=".9"/></svg>
<svg style="left:1066.5px;top:107.7px" width="16" height="16" viewBox="0 0 16 16"><path d="M9 9l5.500 5.500" stroke="#7a5a4a" stroke-width="2"/><circle cx="5.800" cy="5.800" r="5" fill="#e8f0fb" stroke="#8a9ab8" stroke-width="1"/><path d="M2.800 5.800h6M5.800 2.800v6" stroke="#1e5fc0" stroke-width="1.800"/></svg>
<svg style="left:1093.5px;top:107.7px" width="16" height="16" viewBox="0 0 16 16"><path d="M9 9l5.500 5.500" stroke="#7a5a4a" stroke-width="2"/><circle cx="5.800" cy="5.800" r="5" fill="#e8f0fb" stroke="#8a9ab8" stroke-width="1"/><path d="M2.800 5.800h6" stroke="#1e5fc0" stroke-width="1.800"/></svg>
<div class="abs" style="left:1121px;top:103px;width:1px;height:25px;background:#cfcfce;"></div>
<svg style="left:1135.5px;top:106.5px" width="16" height="16" viewBox="0 0 16 16"><rect x="1" y="5.500" width="11.500" height="10" fill="#f4f8ff" stroke="#6a8ac0"/><rect x="1" y="5.500" width="11.500" height="2.600" fill="#5a8fd6" stroke="#3f6fb5" stroke-width=".6"/><path d="M6 3h5" stroke="#333" stroke-width="1"/><path d="M10 3l3-2.800v1.800h3v2h-3v1.800z" fill="#4fb84f" stroke="#2a7a33" stroke-width=".7"/></svg>
<svg style="left:1159px;top:113px" width="10" height="5" viewBox="0 0 10 5"><path d="M0 0H10L5 5Z" fill="#2b2b2b"/></svg>
<svg style="left:1191px;top:108px" width="6" height="16" viewBox="0 0 6 16"><circle cx="3" cy="2.400" r="1.800" fill="#f4f4f4" stroke="#555" stroke-width=".9"/><circle cx="3" cy="7.400" r="1.800" fill="#f4f4f4" stroke="#555" stroke-width=".9"/><circle cx="3" cy="12.400" r="1.800" fill="#f4f4f4" stroke="#555" stroke-width=".9"/></svg>
<svg style="left:1223px;top:109px" width="10" height="4" viewBox="0 0 10 4"><rect x=".5" y=".5" width="9" height="3" fill="#fbfbfb" stroke="#4a4a4a" stroke-width="1"/></svg>
<svg style="left:1250px;top:109px" width="10" height="10" viewBox="0 0 10 10"><rect x=".5" y=".5" width="9" height="9" fill="#fbfbfb" stroke="#4a4a4a" stroke-width="1"/><path d="M.5 2.500h9" stroke="#4a4a4a" stroke-width="1"/></svg>
<div class="abs" style="left:200px;top:134px;width:292px;height:25px;background:#fff;"></div>
<div class="abs" style="left:200px;top:159px;width:290px;height:434px;background:#f5f5f5;"></div>
<div class="abs" style="left:200px;top:158px;width:292px;height:1px;background:#e4e4e4;"></div>
<div class="abs" style="left:490px;top:159px;width:3px;height:434px;background:#dadada;"></div>
<div class="abs" style="left:493px;top:160px;width:769px;height:433px;background:#fff;"></div>
<div class="abs" style="left:493px;top:159px;width:769px;height:1px;background:#1a1a1a;"></div>
<div class="t" style="left:493.00px;top:135.00px;font-size:14.00px;line-height:16px;letter-spacing:0.206px;color:#111;">06:39:20.000</div>
<div class="abs" style="left:493px;top:156px;width:1px;height:3px;background:#1a1a1a;"></div>
<div class="t" style="left:646.50px;top:135.00px;font-size:14.00px;line-height:16px;letter-spacing:0.206px;color:#111;">06:39:20.020</div>
<div class="abs" style="left:646px;top:156px;width:1px;height:3px;background:#1a1a1a;"></div>
<div class="abs" style="left:646px;top:160px;width:1px;height:433px;background:#a9a9a9;"></div>
<div class="t" style="left:800.00px;top:135.00px;font-size:14.00px;line-height:16px;letter-spacing:0.206px;color:#111;">06:39:20.040</div>
<div class="abs" style="left:800px;top:156px;width:1px;height:3px;background:#1a1a1a;"></div>
<div class="abs" style="left:800px;top:160px;width:1px;height:433px;background:#a9a9a9;"></div>
<div class="t" style="left:954.00px;top:135.00px;font-size:14.00px;line-height:16px;letter-spacing:0.206px;color:#111;">06:39:20.060</div>
<div class="abs" style="left:954px;top:156px;width:1px;height:3px;background:#1a1a1a;"></div>
<div class="abs" style="left:954px;top:160px;width:1px;height:433px;background:#a9a9a9;"></div>
<div class="t" style="left:1108.00px;top:135.00px;font-size:14.00px;line-height:16px;letter-spacing:0.206px;color:#111;">06:39:20.080</div>
<div class="abs" style="left:1108px;top:156px;width:1px;height:3px;background:#1a1a1a;"></div>
<div class="abs" style="left:1108px;top:160px;width:1px;height:433px;background:#a9a9a9;"></div>
<div class="abs" style="left:1261px;top:156px;width:1px;height:3px;background:#1a1a1a;"></div>
<div class="abs" style="left:493px;top:160px;width:1px;height:433px;background:#6f6fe8;"></div>
<div class="abs" style="left:1262px;top:160px;width:1px;height:433px;background:#f2f2f2;"></div>
<div class="abs" style="left:1263px;top:160px;width:12px;height:433px;background:#c5c6c5;"></div>
<div class="abs" style="left:1266px;top:162px;width:6px;height:427px;background:#787b7b;border-radius:4px"></div>
<div class="abs" style="left:493px;top:593px;width:770px;height:11.5px;background:#c5c6c5;"></div>
<div class="abs" style="left:496px;top:596px;width:147px;height:6px;background:#787b7b;border-radius:3px"></div>
<div class="abs" style="left:198px;top:608px;width:1079px;height:4px;background:#eeeeed;"></div>
<div class="abs" style="left:197px;top:612px;width:1081px;height:379px;border:1px solid #a3a3a2;border-radius:7px 7px 0 0;background:#e8e8e7"></div>
<svg style="left:0;top:0" width="1280" height="1406"><defs><linearGradient id="gEd" x1="0" y1="0" x2="0" y2="1"><stop offset="0" stop-color="#fbfbfb"/><stop offset="1" stop-color="#f0f0ef"/></linearGradient></defs><path d="M198 644 V619 Q198 613 204 613 H372 C388 613 396 644 418 644 Z" fill="url(#gEd)"/><path d="M372 613.5 C388 613.5 396 643.5 418 643.5" fill="none" stroke="#a3a3a2" stroke-width="1"/></svg>
<div class="abs" style="left:416px;top:644px;width:861px;height:1px;background:#a3a3a2;"></div>
<svg style="left:202px;top:622px" width="16" height="16" viewBox="0 0 16 16"><rect x="2" y="2.500" width="2.400" height="2.400" fill="#dfe8f8" stroke="#3b5fb0" stroke-width=".9"/><rect x="2" y="6.500" width="2.400" height="2.400" fill="#dfe8f8" stroke="#3b5fb0" stroke-width=".9"/><rect x="2" y="10.500" width="2.400" height="2.400" fill="#dfe8f8" stroke="#3b5fb0" stroke-width=".9"/><path d="M6.500 3.700h7M6.500 7.700h7M6.500 11.700h7" stroke="#8a9ac0" stroke-width="1.100"/></svg>
<div class="t" style="left:221.00px;top:621.00px;font-size:14.00px;line-height:16px;letter-spacing:0.383px;color:#111;">20140219-123819.btf</div>
<svg style="left:370px;top:624.5px" width="10" height="10" viewBox="0 0 10 10"><path d="M.8 .8h2.400L5 2.900 6.800 .8h2.400v2.400L7.100 5l2.100 1.800v2.400H6.800L5 7.100 3.200 9.200H.8V6.800L2.900 5 .8 3.200z" fill="#fdfdfd" stroke="#111" stroke-width="1" stroke-linejoin="miter"/></svg>
<svg style="left:1223px;top:622px" width="10" height="4" viewBox="0 0 10 4"><rect x=".5" y=".5" width="9" height="3" fill="#fbfbfb" stroke="#4a4a4a" stroke-width="1"/></svg>
<svg style="left:1250px;top:622px" width="10" height="10" viewBox="0 0 10 10"><rect x=".5" y=".5" width="9" height="9" fill="#fbfbfb" stroke="#4a4a4a" stroke-width="1"/><path d="M.5 2.500h9" stroke="#4a4a4a" stroke-width="1"/></svg>
<div class="abs" style="left:200px;top:647px;width:1076px;height:343px;background:#fff;overflow:hidden">
<div class="abs" style="left:0px;top:24px;width:1063px;height:1px;background:#dedede;"></div>
<div class="abs" style="left:27px;top:0px;width:1px;height:24px;background:#dcdcdc;"></div>
<div class="abs" style="left:27px;top:25px;width:1px;height:320px;background:#ededed;"></div>
<div class="abs" style="left:212px;top:0px;width:1px;height:24px;background:#dcdcdc;"></div>
<div class="abs" style="left:212px;top:25px;width:1px;height:320px;background:#ededed;"></div>
<div class="abs" style="left:371px;top:0px;width:1px;height:24px;background:#dcdcdc;"></div>
<div class="abs" style="left:371px;top:25px;width:1px;height:320px;background:#ededed;"></div>
<div class="abs" style="left:497px;top:0px;width:1px;height:24px;background:#dcdcdc;"></div>
<div class="abs" style="left:497px;top:25px;width:1px;height:320px;background:#ededed;"></div>
<div class="abs" style="left:589px;top:0px;width:1px;height:24px;background:#dcdcdc;"></div>
<div class="abs" style="left:589px;top:25px;width:1px;height:320px;background:#ededed;"></div>
<div class="abs" style="left:748px;top:0px;width:1px;height:24px;background:#dcdcdc;"></div>
<div class="abs" style="left:748px;top:25px;width:1px;height:320px;background:#ededed;"></div>
<div class="abs" style="left:872px;top:0px;width:1px;height:24px;background:#dcdcdc;"></div>
<div class="abs" style="left:872px;top:25px;width:1px;height:320px;background:#ededed;"></div>
<div class="abs" style="left:987px;top:0px;width:1px;height:24px;background:#dcdcdc;"></div>
<div class="abs" style="left:987px;top:25px;width:1px;height:320px;background:#ededed;"></div>
<div class="t" style="left:34.50px;top:4.00px;font-size:14.00px;line-height:16px;letter-spacing:0.481px;color:#8e8e8e;font-weight:bold;">Timestamp</div>
<div class="t" style="left:219.50px;top:4.00px;font-size:14.00px;line-height:16px;letter-spacing:0.008px;color:#8e8e8e;font-weight:bold;">Source</div>
<div class="t" style="left:378.50px;top:4.00px;font-size:14.00px;line-height:16px;letter-spacing:0.204px;color:#8e8e8e;font-weight:bold;">Source instance</div>
<div class="t" style="left:504.50px;top:4.00px;font-size:14.00px;line-height:16px;letter-spacing:0.690px;color:#8e8e8e;font-weight:bold;">Event type</div>
<div class="t" style="left:596.50px;top:4.00px;font-size:14.00px;line-height:16px;letter-spacing:0.851px;color:#8e8e8e;font-weight:bold;">Target</div>
<div class="t" style="left:755.50px;top:4.00px;font-size:14.00px;line-height:16px;letter-spacing:0.512px;color:#8e8e8e;font-weight:bold;">Target instance</div>
<div class="t" style="left:879.50px;top:4.00px;font-size:14.00px;line-height:16px;letter-spacing:0.720px;color:#8e8e8e;font-weight:bold;">Event</div>
<div class="t" style="left:994.50px;top:4.00px;font-size:14.00px;line-height:16px;letter-spacing:0.902px;color:#8e8e8e;font-weight:bold;">Notes</div>
<div class="t" style="left:35.50px;top:30.00px;font-size:14.00px;line-height:16px;letter-spacing:0.040px;color:#9a9a9a;">&lt;srch&gt;</div>
<div class="t" style="left:220.00px;top:30.00px;font-size:14.00px;line-height:16px;letter-spacing:0.040px;color:#9a9a9a;">&lt;srch&gt;</div>
<div class="t" style="left:379.00px;top:30.00px;font-size:14.00px;line-height:16px;letter-spacing:0.040px;color:#9a9a9a;">&lt;srch&gt;</div>
<div class="t" style="left:505.00px;top:30.00px;font-size:14.00px;line-height:16px;letter-spacing:0.040px;color:#9a9a9a;">&lt;srch&gt;</div>
<div class="t" style="left:597.00px;top:30.00px;font-size:14.00px;line-height:16px;letter-spacing:0.040px;color:#9a9a9a;">&lt;srch&gt;</div>
<div class="t" style="left:756.00px;top:30.00px;font-size:14.00px;line-height:16px;letter-spacing:0.040px;color:#9a9a9a;">&lt;srch&gt;</div>
<div class="t" style="left:880.00px;top:30.00px;font-size:14.00px;line-height:16px;letter-spacing:0.040px;color:#9a9a9a;">&lt;srch&gt;</div>
<div class="t" style="left:995.00px;top:30.00px;font-size:14.00px;line-height:16px;letter-spacing:0.040px;color:#9a9a9a;">&lt;srch&gt;</div>
<svg style="left:3px;top:30px" width="16" height="16" viewBox="0 0 16 16"><path d="M7.600 5.500L12.400 .8l2.900.1.300 3.300L11.200 9.100z" fill="#fbd97c" stroke="#e09a20" stroke-width=".9" stroke-linejoin="round"/><path d="M4.300 8.600L7.600 5.500l3.600 3.600-3.300 3.100z" fill="#8a8294" stroke="#6e6878" stroke-width=".5"/><path d="M.4 13.400L4.300 8.600l3.600 3.600-3.400 3-3.300-.2z" fill="#fff4b8" stroke="#e6a624" stroke-width=".9" stroke-linejoin="round"/><circle cx="12.200" cy="3.600" r=".9" fill="#1a3a9a"/></svg>
<div class="abs" style="left:35.5px;top:49.5px;width:176.5px;height:23px;overflow:hidden"><div class="t" style="left:0.00px;top:3.00px;font-size:14.00px;line-height:16px;letter-spacing:-0.017px;color:#111;">02-19 06:39:20.000 000 000</div>
</div>
<div class="abs" style="left:220px;top:49.5px;width:151px;height:23px;overflow:hidden"><div class="t" style="left:0.00px;top:3.00px;font-size:14.00px;line-height:16px;letter-spacing:0.211px;color:#111;">SEM_DataElement1</div>
</div>
<div class="abs" style="left:379px;top:49.5px;width:118px;height:23px;overflow:hidden"><div class="t" style="left:0.00px;top:3.00px;font-size:14.00px;line-height:16px;letter-spacing:0.000px;color:#111;">0</div>
</div>
<div class="abs" style="left:505px;top:49.5px;width:84px;height:23px;overflow:hidden"><div class="t" style="left:0.00px;top:3.00px;font-size:14.00px;line-height:16px;letter-spacing:0.516px;color:#111;">Semaphore</div>
</div>
<div class="abs" style="left:597px;top:49.5px;width:151px;height:23px;overflow:hidden"><div class="t" style="left:0.00px;top:3.00px;font-size:14.00px;line-height:16px;letter-spacing:0.211px;color:#111;">SEM_DataElement1</div>
</div>
<div class="abs" style="left:756px;top:49.5px;width:116px;height:23px;overflow:hidden"><div class="t" style="left:0.00px;top:3.00px;font-size:14.00px;line-height:16px;letter-spacing:0.000px;color:#111;">0</div>
</div>
<div class="abs" style="left:880px;top:49.5px;width:107px;height:23px;overflow:hidden"><div class="t" style="left:0.00px;top:3.00px;font-size:14.00px;line-height:16px;letter-spacing:0.746px;color:#111;">ready</div>
</div>
<div class="abs" style="left:995px;top:49.5px;width:68px;height:23px;overflow:hidden"><div class="t" style="left:0.00px;top:3.00px;font-size:14.00px;line-height:16px;letter-spacing:0.000px;color:#111;">0</div>
</div>
<div class="abs" style="left:35.5px;top:72.5px;width:176.5px;height:23px;overflow:hidden"><div class="t" style="left:0.00px;top:3.00px;font-size:14.00px;line-height:16px;letter-spacing:-0.017px;color:#111;">02-19 06:39:20.000 000 000</div>
</div>
<div class="abs" style="left:220px;top:72.5px;width:151px;height:23px;overflow:hidden"><div class="t" style="left:0.00px;top:3.00px;font-size:14.00px;line-height:16px;letter-spacing:0.211px;color:#111;">SEM_DataElement1</div>
</div>
<div class="abs" style="left:379px;top:72.5px;width:118px;height:23px;overflow:hidden"><div class="t" style="left:0.00px;top:3.00px;font-size:14.00px;line-height:16px;letter-spacing:0.000px;color:#111;">0</div>
</div>
<div class="abs" style="left:505px;top:72.5px;width:84px;height:23px;overflow:hidden"><div class="t" style="left:0.00px;top:3.00px;font-size:14.00px;line-height:16px;letter-spacing:0.516px;color:#111;">Semaphore</div>
</div>
<div class="abs" style="left:597px;top:72.5px;width:151px;height:23px;overflow:hidden"><div class="t" style="left:0.00px;top:3.00px;font-size:14.00px;line-height:16px;letter-spacing:0.211px;color:#111;">SEM_DataElement1</div>
</div>
<div class="abs" style="left:756px;top:72.5px;width:116px;height:23px;overflow:hidden"><div class="t" style="left:0.00px;top:3.00px;font-size:14.00px;line-height:16px;letter-spacing:0.000px;color:#111;">0</div>
</div>
<div class="abs" style="left:880px;top:72.5px;width:107px;height:23px;overflow:hidden"><div class="t" style="left:0.00px;top:3.00px;font-size:14.00px;line-height:16px;letter-spacing:1.059px;color:#111;">free</div>
</div>
<div class="abs" style="left:995px;top:72.5px;width:68px;height:23px;overflow:hidden"><div class="t" style="left:0.00px;top:3.00px;font-size:14.00px;line-height:16px;letter-spacing:0.000px;color:#111;">0</div>
</div>
<div class="abs" style="left:35.5px;top:95.5px;width:176.5px;height:23px;overflow:hidden"><div class="t" style="left:0.00px;top:3.00px;font-size:14.00px;line-height:16px;letter-spacing:-0.017px;color:#111;">02-19 06:39:20.000 000 000</div>
</div>
<div class="abs" style="left:220px;top:95.5px;width:151px;height:23px;overflow:hidden"><div class="t" style="left:0.00px;top:3.00px;font-size:14.00px;line-height:16px;letter-spacing:-0.195px;color:#111;">SIM</div>
</div>
<div class="abs" style="left:379px;top:95.5px;width:118px;height:23px;overflow:hidden"><div class="t" style="left:0.00px;top:3.00px;font-size:14.00px;line-height:16px;letter-spacing:-1.447px;color:#111;">-1</div>
</div>
<div class="abs" style="left:505px;top:95.5px;width:84px;height:23px;overflow:hidden"><div class="t" style="left:0.00px;top:3.00px;font-size:14.00px;line-height:16px;letter-spacing:0.474px;color:#111;">Stimulus</div>
</div>
<div class="abs" style="left:597px;top:95.5px;width:151px;height:23px;overflow:hidden"><div class="t" style="left:0.00px;top:3.00px;font-size:14.00px;line-height:16px;letter-spacing:-0.512px;color:#111;">SYS_WAKE-UP</div>
</div>
<div class="abs" style="left:756px;top:95.5px;width:116px;height:23px;overflow:hidden"><div class="t" style="left:0.00px;top:3.00px;font-size:14.00px;line-height:16px;letter-spacing:0.000px;color:#111;">0</div>
</div>
<div class="abs" style="left:880px;top:95.5px;width:107px;height:23px;overflow:hidden"><div class="t" style="left:0.00px;top:3.00px;font-size:14.00px;line-height:16px;letter-spacing:0.953px;color:#111;">trigger</div>
</div>
<div class="abs" style="left:35.5px;top:118.5px;width:176.5px;height:23px;overflow:hidden"><div class="t" style="left:0.00px;top:3.00px;font-size:14.00px;line-height:16px;letter-spacing:-0.017px;color:#111;">02-19 06:39:20.000 000 000</div>
</div>
<div class="abs" style="left:220px;top:118.5px;width:151px;height:23px;overflow:hidden"><div class="t" style="left:0.00px;top:3.00px;font-size:14.00px;line-height:16px;letter-spacing:0.117px;color:#111;">Core_1</div>
</div>
<div class="abs" style="left:379px;top:118.5px;width:118px;height:23px;overflow:hidden"><div class="t" style="left:0.00px;top:3.00px;font-size:14.00px;line-height:16px;letter-spacing:0.000px;color:#111;">0</div>
</div>
<div class="abs" style="left:505px;top:118.5px;width:84px;height:23px;overflow:hidden"><div class="t" style="left:0.00px;top:3.00px;font-size:14.00px;line-height:16px;letter-spacing:0.719px;color:#111;">Core</div>
</div>
<div class="abs" style="left:597px;top:118.5px;width:151px;height:23px;overflow:hidden"><div class="t" style="left:0.00px;top:3.00px;font-size:14.00px;line-height:16px;letter-spacing:0.117px;color:#111;">Core_1</div>
</div>
<div class="abs" style="left:756px;top:118.5px;width:116px;height:23px;overflow:hidden"><div class="t" style="left:0.00px;top:3.00px;font-size:14.00px;line-height:16px;letter-spacing:0.000px;color:#111;">0</div>
</div>
<div class="abs" style="left:880px;top:118.5px;width:107px;height:23px;overflow:hidden"><div class="t" style="left:0.00px;top:3.00px;font-size:14.00px;line-height:16px;letter-spacing:0.573px;color:#111;">set_frequence</div>
</div>
<div class="abs" style="left:995px;top:118.5px;width:68px;height:23px;overflow:hidden"><div class="t" style="left:0.00px;top:3.00px;font-size:14.00px;line-height:16px;letter-spacing:0.188px;color:#111;">40000000</div>
</div>
<div class="abs" style="left:35.5px;top:141.5px;width:176.5px;height:23px;overflow:hidden"><div class="t" style="left:0.00px;top:3.00px;font-size:14.00px;line-height:16px;letter-spacing:-0.017px;color:#111;">02-19 06:39:20.000 000 000</div>
</div>
<div class="abs" style="left:220px;top:141.5px;width:151px;height:23px;overflow:hidden"><div class="t" style="left:0.00px;top:3.00px;font-size:14.00px;line-height:16px;letter-spacing:0.217px;color:#111;">Core_2</div>
</div>
<div class="abs" style="left:379px;top:141.5px;width:118px;height:23px;overflow:hidden"><div class="t" style="left:0.00px;top:3.00px;font-size:14.00px;line-height:16px;letter-spacing:0.000px;color:#111;">0</div>
</div>
<div class="abs" style="left:505px;top:141.5px;width:84px;height:23px;overflow:hidden"><div class="t" style="left:0.00px;top:3.00px;font-size:14.00px;line-height:16px;letter-spacing:0.719px;color:#111;">Core</div>
</div>
<div class="abs" style="left:597px;top:141.5px;width:151px;height:23px;overflow:hidden"><div class="t" style="left:0.00px;top:3.00px;font-size:14.00px;line-height:16px;letter-spacing:0.217px;color:#111;">Core_2</div>
</div>
<div class="abs" style="left:756px;top:141.5px;width:116px;height:23px;overflow:hidden"><div class="t" style="left:0.00px;top:3.00px;font-size:14.00px;line-height:16px;letter-spacing:0.000px;color:#111;">0</div>
</div>
<div class="abs" style="left:880px;top:141.5px;width:107px;height:23px;overflow:hidden"><div class="t" style="left:0.00px;top:3.00px;font-size:14.00px;line-height:16px;letter-spacing:0.573px;color:#111;">set_frequence</div>
</div>
<div class="abs" style="left:995px;top:141.5px;width:68px;height:23px;overflow:hidden"><div class="t" style="left:0.00px;top:3.00px;font-size:14.00px;line-height:16px;letter-spacing:0.188px;color:#111;">40000000</div>
</div>
<div class="abs" style="left:35.5px;top:164.5px;width:176.5px;height:23px;overflow:hidden"><div class="t" style="left:0.00px;top:3.00px;font-size:14.00px;line-height:16px;letter-spacing:-0.017px;color:#111;">02-19 06:39:20.000 000 000</div>
</div>
<div class="abs" style="left:220px;top:164.5px;width:151px;height:23px;overflow:hidden"><div class="t" style="left:0.00px;top:3.00px;font-size:14.00px;line-height:16px;letter-spacing:-0.195px;color:#111;">SIM</div>
</div>
<div class="abs" style="left:379px;top:164.5px;width:118px;height:23px;overflow:hidden"><div class="t" style="left:0.00px;top:3.00px;font-size:14.00px;line-height:16px;letter-spacing:-1.447px;color:#111;">-1</div>
</div>
<div class="abs" style="left:505px;top:164.5px;width:84px;height:23px;overflow:hidden"><div class="t" style="left:0.00px;top:3.00px;font-size:14.00px;line-height:16px;letter-spacing:0.474px;color:#111;">Stimulus</div>
</div>
<div class="abs" style="left:597px;top:164.5px;width:151px;height:23px;overflow:hidden"><div class="t" style="left:0.00px;top:3.00px;font-size:14.00px;line-height:16px;letter-spacing:-0.228px;color:#111;">TIMER-B_2ms</div>
</div>
<div class="abs" style="left:756px;top:164.5px;width:116px;height:23px;overflow:hidden"><div class="t" style="left:0.00px;top:3.00px;font-size:14.00px;line-height:16px;letter-spacing:0.000px;color:#111;">0</div>
</div>
<div class="abs" style="left:880px;top:164.5px;width:107px;height:23px;overflow:hidden"><div class="t" style="left:0.00px;top:3.00px;font-size:14.00px;line-height:16px;letter-spacing:0.953px;color:#111;">trigger</div>
</div>
<div class="abs" style="left:35.5px;top:187.5px;width:176.5px;height:23px;overflow:hidden"><div class="t" style="left:0.00px;top:3.00px;font-size:14.00px;line-height:16px;letter-spacing:-0.017px;color:#111;">02-19 06:39:20.000 000 000</div>
</div>
<div class="abs" style="left:220px;top:187.5px;width:151px;height:23px;overflow:hidden"><div class="t" style="left:0.00px;top:3.00px;font-size:14.00px;line-height:16px;letter-spacing:-0.228px;color:#111;">TIMER-B_2ms</div>
</div>
<div class="abs" style="left:379px;top:187.5px;width:118px;height:23px;overflow:hidden"><div class="t" style="left:0.00px;top:3.00px;font-size:14.00px;line-height:16px;letter-spacing:0.000px;color:#111;">0</div>
</div>
<div class="abs" style="left:505px;top:187.5px;width:84px;height:23px;overflow:hidden"><div class="t" style="left:0.00px;top:3.00px;font-size:14.00px;line-height:16px;letter-spacing:0.238px;color:#111;">Task</div>
</div>
<div class="abs" style="left:597px;top:187.5px;width:151px;height:23px;overflow:hidden"><div class="t" style="left:0.00px;top:3.00px;font-size:14.00px;line-height:16px;letter-spacing:0.618px;color:#111;">TASK_WritingActuator</div>
</div>
<div class="abs" style="left:756px;top:187.5px;width:116px;height:23px;overflow:hidden"><div class="t" style="left:0.00px;top:3.00px;font-size:14.00px;line-height:16px;letter-spacing:0.000px;color:#111;">0</div>
</div>
<div class="abs" style="left:880px;top:187.5px;width:107px;height:23px;overflow:hidden"><div class="t" style="left:0.00px;top:3.00px;font-size:14.00px;line-height:16px;letter-spacing:0.679px;color:#111;">activate</div>
</div>
<div class="abs" style="left:35.5px;top:210.5px;width:176.5px;height:23px;overflow:hidden"><div class="t" style="left:0.00px;top:3.00px;font-size:14.00px;line-height:16px;letter-spacing:-0.017px;color:#111;">02-19 06:39:20.000 000 000</div>
</div>
<div class="abs" style="left:220px;top:210.5px;width:151px;height:23px;overflow:hidden"><div class="t" style="left:0.00px;top:3.00px;font-size:14.00px;line-height:16px;letter-spacing:0.618px;color:#111;">TASK_WritingActuator</div>
</div>
<div class="abs" style="left:379px;top:210.5px;width:118px;height:23px;overflow:hidden"><div class="t" style="left:0.00px;top:3.00px;font-size:14.00px;line-height:16px;letter-spacing:0.000px;color:#111;">0</div>
</div>
<div class="abs" style="left:505px;top:210.5px;width:84px;height:23px;overflow:hidden"><div class="t" style="left:0.00px;top:3.00px;font-size:14.00px;line-height:16px;letter-spacing:0.308px;color:#111;">Scheduler</div>
</div>
<div class="abs" style="left:597px;top:210.5px;width:151px;height:23px;overflow:hidden"><div class="t" style="left:0.00px;top:3.00px;font-size:14.00px;line-height:16px;letter-spacing:-0.482px;color:#111;">SCHED_Tasks_C2</div>
</div>
<div class="abs" style="left:756px;top:210.5px;width:116px;height:23px;overflow:hidden"><div class="t" style="left:0.00px;top:3.00px;font-size:14.00px;line-height:16px;letter-spacing:-1.447px;color:#111;">-1</div>
</div>
<div class="abs" style="left:880px;top:210.5px;width:107px;height:23px;overflow:hidden"><div class="t" style="left:0.00px;top:3.00px;font-size:14.00px;line-height:16px;letter-spacing:0.653px;color:#111;">processactivate</div>
</div>
<div class="abs" style="left:35.5px;top:233.5px;width:176.5px;height:23px;overflow:hidden"><div class="t" style="left:0.00px;top:3.00px;font-size:14.00px;line-height:16px;letter-spacing:-0.017px;color:#111;">02-19 06:39:20.000 000 000</div>
</div>
<div class="abs" style="left:220px;top:233.5px;width:151px;height:23px;overflow:hidden"><div class="t" style="left:0.00px;top:3.00px;font-size:14.00px;line-height:16px;letter-spacing:-0.195px;color:#111;">SIM</div>
</div>
<div class="abs" style="left:379px;top:233.5px;width:118px;height:23px;overflow:hidden"><div class="t" style="left:0.00px;top:3.00px;font-size:14.00px;line-height:16px;letter-spacing:-1.447px;color:#111;">-1</div>
</div>
<div class="abs" style="left:505px;top:233.5px;width:84px;height:23px;overflow:hidden"><div class="t" style="left:0.00px;top:3.00px;font-size:14.00px;line-height:16px;letter-spacing:0.474px;color:#111;">Stimulus</div>
</div>
<div class="abs" style="left:597px;top:233.5px;width:151px;height:23px;overflow:hidden"><div class="t" style="left:0.00px;top:3.00px;font-size:14.00px;line-height:16px;letter-spacing:-0.259px;color:#111;">TIMER-10MS_2</div>
</div>
<div class="abs" style="left:756px;top:233.5px;width:116px;height:23px;overflow:hidden"><div class="t" style="left:0.00px;top:3.00px;font-size:14.00px;line-height:16px;letter-spacing:0.000px;color:#111;">0</div>
</div>
<div class="abs" style="left:880px;top:233.5px;width:107px;height:23px;overflow:hidden"><div class="t" style="left:0.00px;top:3.00px;font-size:14.00px;line-height:16px;letter-spacing:0.953px;color:#111;">trigger</div>
</div>
<div class="abs" style="left:35.5px;top:256.5px;width:176.5px;height:23px;overflow:hidden"><div class="t" style="left:0.00px;top:3.00px;font-size:14.00px;line-height:16px;letter-spacing:-0.017px;color:#111;">02-19 06:39:20.000 000 000</div>
</div>
<div class="abs" style="left:220px;top:256.5px;width:151px;height:23px;overflow:hidden"><div class="t" style="left:0.00px;top:3.00px;font-size:14.00px;line-height:16px;letter-spacing:-0.259px;color:#111;">TIMER-10MS_2</div>
</div>
<div class="abs" style="left:379px;top:256.5px;width:118px;height:23px;overflow:hidden"><div class="t" style="left:0.00px;top:3.00px;font-size:14.00px;line-height:16px;letter-spacing:0.000px;color:#111;">0</div>
</div>
<div class="abs" style="left:505px;top:256.5px;width:84px;height:23px;overflow:hidden"><div class="t" style="left:0.00px;top:3.00px;font-size:14.00px;line-height:16px;letter-spacing:0.238px;color:#111;">Task</div>
</div>
<div class="abs" style="left:597px;top:256.5px;width:151px;height:23px;overflow:hidden"><div class="t" style="left:0.00px;top:3.00px;font-size:14.00px;line-height:16px;letter-spacing:-0.196px;color:#111;">TASK_10MS_DL2</div>
</div>
<div class="abs" style="left:756px;top:256.5px;width:116px;height:23px;overflow:hidden"><div class="t" style="left:0.00px;top:3.00px;font-size:14.00px;line-height:16px;letter-spacing:0.000px;color:#111;">0</div>
</div>
<div class="abs" style="left:880px;top:256.5px;width:107px;height:23px;overflow:hidden"><div class="t" style="left:0.00px;top:3.00px;font-size:14.00px;line-height:16px;letter-spacing:0.679px;color:#111;">activate</div>
</div>
<div class="abs" style="left:35.5px;top:279.5px;width:176.5px;height:23px;overflow:hidden"><div class="t" style="left:0.00px;top:3.00px;font-size:14.00px;line-height:16px;letter-spacing:-0.017px;color:#111;">02-19 06:39:20.000 000 000</div>
</div>
<div class="abs" style="left:220px;top:279.5px;width:151px;height:23px;overflow:hidden"><div class="t" style="left:0.00px;top:3.00px;font-size:14.00px;line-height:16px;letter-spacing:-0.196px;color:#111;">TASK_10MS_DL2</div>
</div>
<div class="abs" style="left:379px;top:279.5px;width:118px;height:23px;overflow:hidden"><div class="t" style="left:0.00px;top:3.00px;font-size:14.00px;line-height:16px;letter-spacing:0.000px;color:#111;">0</div>
</div>
<div class="abs" style="left:505px;top:279.5px;width:84px;height:23px;overflow:hidden"><div class="t" style="left:0.00px;top:3.00px;font-size:14.00px;line-height:16px;letter-spacing:0.308px;color:#111;">Scheduler</div>
</div>
<div class="abs" style="left:597px;top:279.5px;width:151px;height:23px;overflow:hidden"><div class="t" style="left:0.00px;top:3.00px;font-size:14.00px;line-height:16px;letter-spacing:-0.559px;color:#111;">SCHED_Tasks_C1</div>
</div>
<div class="abs" style="left:756px;top:279.5px;width:116px;height:23px;overflow:hidden"><div class="t" style="left:0.00px;top:3.00px;font-size:14.00px;line-height:16px;letter-spacing:-1.447px;color:#111;">-1</div>
</div>
<div class="abs" style="left:880px;top:279.5px;width:107px;height:23px;overflow:hidden"><div class="t" style="left:0.00px;top:3.00px;font-size:14.00px;line-height:16px;letter-spacing:0.653px;color:#111;">processactivate</div>
</div>
<div class="abs" style="left:995px;top:279.5px;width:68px;height:23px;overflow:hidden"><div class="t" style="left:0.00px;top:3.00px;font-size:14.00px;line-height:16px;letter-spacing:0.329px;color:#111;">some note</div>
</div>
<div class="abs" style="left:35.5px;top:302.5px;width:176.5px;height:23px;overflow:hidden"><div class="t" style="left:0.00px;top:3.00px;font-size:14.00px;line-height:16px;letter-spacing:-0.017px;color:#111;">02-19 06:39:20.000 000 000</div>
</div>
<div class="abs" style="left:220px;top:302.5px;width:151px;height:23px;overflow:hidden"><div class="t" style="left:0.00px;top:3.00px;font-size:14.00px;line-height:16px;letter-spacing:-0.195px;color:#111;">SIM</div>
</div>
<div class="abs" style="left:379px;top:302.5px;width:118px;height:23px;overflow:hidden"><div class="t" style="left:0.00px;top:3.00px;font-size:14.00px;line-height:16px;letter-spacing:-1.447px;color:#111;">-1</div>
</div>
<div class="abs" style="left:505px;top:302.5px;width:84px;height:23px;overflow:hidden"><div class="t" style="left:0.00px;top:3.00px;font-size:14.00px;line-height:16px;letter-spacing:0.474px;color:#111;">Stimulus</div>
</div>
<div class="abs" style="left:597px;top:302.5px;width:151px;height:23px;overflow:hidden"><div class="t" style="left:0.00px;top:3.00px;font-size:14.00px;line-height:16px;letter-spacing:-0.207px;color:#111;">TIMER-200MS</div>
</div>
<div class="abs" style="left:756px;top:302.5px;width:116px;height:23px;overflow:hidden"><div class="t" style="left:0.00px;top:3.00px;font-size:14.00px;line-height:16px;letter-spacing:0.000px;color:#111;">0</div>
</div>
<div class="abs" style="left:880px;top:302.5px;width:107px;height:23px;overflow:hidden"><div class="t" style="left:0.00px;top:3.00px;font-size:14.00px;line-height:16px;letter-spacing:0.953px;color:#111;">trigger</div>
</div>
<div class="abs" style="left:35.5px;top:325.5px;width:176.5px;height:23px;overflow:hidden"><div class="t" style="left:0.00px;top:3.00px;font-size:14.00px;line-height:16px;letter-spacing:-0.017px;color:#111;">02-19 06:39:20.000 000 000</div>
</div>
<div class="abs" style="left:220px;top:325.5px;width:151px;height:23px;overflow:hidden"><div class="t" style="left:0.00px;top:3.00px;font-size:14.00px;line-height:16px;letter-spacing:-0.207px;color:#111;">TIMER-200MS</div>
</div>
<div class="abs" style="left:379px;top:325.5px;width:118px;height:23px;overflow:hidden"><div class="t" style="left:0.00px;top:3.00px;font-size:14.00px;line-height:16px;letter-spacing:0.000px;color:#111;">0</div>
</div>
<div class="abs" style="left:505px;top:325.5px;width:84px;height:23px;overflow:hidden"><div class="t" style="left:0.00px;top:3.00px;font-size:14.00px;line-height:16px;letter-spacing:0.238px;color:#111;">Task</div>
</div>
<div class="abs" style="left:597px;top:325.5px;width:151px;height:23px;overflow:hidden"><div class="t" style="left:0.00px;top:3.00px;font-size:14.00px;line-height:16px;letter-spacing:-0.296px;color:#111;">TASK_200MS</div>
</div>
<div class="abs" style="left:756px;top:325.5px;width:116px;height:23px;overflow:hidden"><div class="t" style="left:0.00px;top:3.00px;font-size:14.00px;line-height:16px;letter-spacing:0.000px;color:#111;">0</div>
</div>
<div class="abs" style="left:880px;top:325.5px;width:107px;height:23px;overflow:hidden"><div class="t" style="left:0.00px;top:3.00px;font-size:14.00px;line-height:16px;letter-spacing:0.679px;color:#111;">activate</div>
</div>
<div class="abs" style="left:1063px;top:0px;width:12px;height:343px;background:#c5c6c5;"></div>
<div class="abs" style="left:1075px;top:0px;width:1px;height:343px;background:#e8e8e7;"></div>
<div class="abs" style="left:1066px;top:3px;width:6px;height:40px;background:#787b7b;border-radius:4px"></div>
</div>
<div class="abs" style="left:197px;top:996px;width:1081px;height:379px;border:1px solid #a3a3a2;border-bottom:none;border-radius:7px 7px 0 0;background:#e8e8e7"></div>
<svg style="left:0;top:0" width="1280" height="1406"><defs><linearGradient id="gHist" x1="0" y1="0" x2="0" y2="1"><stop offset="0" stop-color="#fbfbfb"/><stop offset="1" stop-color="#f0f0ef"/></linearGradient></defs><path d="M198 1028 V1003 Q198 997 204 997 H306 C322 997 328 1028 350 1028 Z" fill="url(#gHist)"/><path d="M306 997.5 C322 997.5 328 1027.5 350 1027.5" fill="none" stroke="#a3a3a2" stroke-width="1"/></svg>
<div class="abs" style="left:348px;top:1028px;width:929px;height:1px;background:#a3a3a2;"></div>
<svg style="left:0;top:0" width="1280" height="1406"><path d="M310 996.5 H427 Q433.5 996.5 433.5 1004 V1028" fill="none" stroke="#a3a3a2" stroke-width="1"/></svg>
<svg style="left:0;top:0" width="1280" height="1406"><path d="M434 996.5 H532 Q538.5 996.5 538.5 1004 V1028" fill="none" stroke="#a3a3a2" stroke-width="1"/></svg>
<svg style="left:202px;top:1004px" width="16" height="16" viewBox="0 0 16 16"><path d="M1.500 15V9M4 15V4M6.500 15V1M9 15V6M11.500 15V3M14 15V8" stroke="#3b6fc0" stroke-width="1.200"/></svg>
<div class="t" style="left:221.00px;top:1005.00px;font-size:14.00px;line-height:16px;letter-spacing:0.776px;color:#111;">Histogram</div>
<svg style="left:300px;top:1008px" width="10" height="10" viewBox="0 0 10 10"><path d="M.8 .8h2.400L5 2.900 6.800 .8h2.400v2.400L7.100 5l2.100 1.800v2.400H6.800L5 7.100 3.200 9.200H.8V6.800L2.900 5 .8 3.200z" fill="#fdfdfd" stroke="#111" stroke-width="1" stroke-linejoin="miter"/></svg>
<svg style="left:339px;top:1005px" width="16" height="16" viewBox="0 0 16 16"><rect x=".5" y="2" width="13" height="11.500" fill="#f2f4fa" stroke="#5a6a9a" stroke-width="1"/><rect x=".5" y="2" width="13" height="2.300" fill="#b4bed8" stroke="#5a6a9a" stroke-width="1"/><path d="M1 7h12M1 9.300h12M1 11.500h12M4.500 4.500v9" stroke="#bcc4da" stroke-width=".7"/></svg>
<div class="t" style="left:358.00px;top:1005.00px;font-size:14.00px;line-height:16px;letter-spacing:0.800px;color:#333;">Properties</div>
<svg style="left:438px;top:1004px" width="16" height="16" viewBox="0 0 16 16"><path d="M.8 1.800L8 2.800V15.300L.8 13.800z" fill="#fcfcfc" stroke="#8a8a7a" stroke-width=".9" stroke-linejoin="round"/><path d="M2.500 4.500l1 4 1-3 1 3.500 1-3" stroke="#9ab0c8" stroke-width=".7" fill="none"/><path d="M2.500 10.500l4 .6" stroke="#b0b8c0" stroke-width=".7"/><rect x="13.600" y="1.600" width="2" height="13" fill="#4e5c6c"/><path d="M8.600 1h5v15.500l-2.500-2.600-2.500 2.600z" fill="#6aa8ee" stroke="#2a6ac0" stroke-width=".8" stroke-linejoin="round"/><path d="M10 1.500v11" stroke="#b4d6fa" stroke-width="1.200"/></svg>
<div class="t" style="left:458.00px;top:1005.00px;font-size:14.00px;line-height:16px;letter-spacing:0.748px;color:#333;">Bookmarks</div>
<svg style="left:1125px;top:1004px" width="16" height="16" viewBox="0 0 16 16"><path d="M2.500 14.500V9.500M5.500 14.500V1M8.500 14.500V4.500M11.500 14.500V1M14.500 14.500V7.500" stroke="#e0407a" stroke-width="1.100" stroke-dasharray="2.600 .9"/><path d="M.5 .5L15.500 15.500" stroke="#14207a" stroke-width="1.400"/></svg>
<div class="abs" style="left:1147px;top:999px;width:26px;height:26px;background:#d8d8d7;border:1px solid #bdbdbc;border-radius:3px"></div>
<svg style="left:1152px;top:1004px" width="16" height="16" viewBox="0 0 16 16"><path d="M1.500 14V10" stroke="#d8336a" stroke-width="1.300"/><path d="M4.500 14V2" stroke="#4a4af0" stroke-width="1.300"/><path d="M7.500 14V5" stroke="#d8336a" stroke-width="1.300"/><path d="M10.500 14V2" stroke="#d8336a" stroke-width="1.300"/><path d="M13.500 14V8" stroke="#d8336a" stroke-width="1.300"/><path d="M7.500 10V5M10.500 9V6" stroke="#4a4af0" stroke-width="1.300"/><path d="M1.500 14V11.500M4.500 14V9M7.500 14V10M10.500 14V9M13.500 14V11" stroke="#28d428" stroke-width="1.300"/></svg>
<svg style="left:1191px;top:1005px" width="6" height="16" viewBox="0 0 6 16"><circle cx="3" cy="2.400" r="1.800" fill="#f4f4f4" stroke="#555" stroke-width=".9"/><circle cx="3" cy="7.400" r="1.800" fill="#f4f4f4" stroke="#555" stroke-width=".9"/><circle cx="3" cy="12.400" r="1.800" fill="#f4f4f4" stroke="#555" stroke-width=".9"/></svg>
<svg style="left:1223px;top:1006px" width="10" height="4" viewBox="0 0 10 4"><rect x=".5" y=".5" width="9" height="3" fill="#fbfbfb" stroke="#4a4a4a" stroke-width="1"/></svg>
<svg style="left:1250px;top:1006px" width="10" height="10" viewBox="0 0 10 10"><rect x=".5" y=".5" width="9" height="9" fill="#fbfbfb" stroke="#4a4a4a" stroke-width="1"/><path d="M.5 2.500h9" stroke="#4a4a4a" stroke-width="1"/></svg>
<div class="abs" style="left:200px;top:1055px;width:268px;height:110px;overflow:hidden">
<div class="abs" style="left:0px;top:5px;width:300px;height:67px;border:1px solid #c6c6c5"></div>
<div class="abs" style="left:98px;top:7px;width:200px;height:29px;background:#fff;border:1px solid #cacaca;border-radius:4px"></div>
<div class="abs" style="left:98px;top:41.5px;width:200px;height:29px;background:#fff;border:1px solid #cacaca;border-radius:4px"></div>
<div class="abs" style="left:170px;top:73.5px;width:200px;height:29.5px;background:#fff;border:1px solid #cacaca;border-radius:4px"></div>
<div class="t" style="left:6.00px;top:14.00px;font-size:13.50px;line-height:15px;letter-spacing:-0.057px;color:#3a3a3a;">Selection Start</div>
<div class="t" style="left:11.50px;top:49.00px;font-size:13.50px;line-height:15px;letter-spacing:-0.234px;color:#3a3a3a;">Selection End</div>
<div class="t" style="left:83.50px;top:81.00px;font-size:13.50px;line-height:15px;letter-spacing:-0.279px;color:#3a3a3a;">Window Span</div>
<div class="t" style="left:107.00px;top:13.00px;font-size:14.00px;line-height:16px;letter-spacing:-0.017px;color:#222;">02-19 06:39:20.000 000 000</div>
<div class="t" style="left:107.00px;top:48.00px;font-size:14.00px;line-height:16px;letter-spacing:-0.017px;color:#222;">02-19 06:39:20.000 000 000</div>
<div class="t" style="left:179.00px;top:80.00px;font-size:14.00px;line-height:16px;letter-spacing:-0.221px;color:#222;">000.100 000 000</div>
</div>
<div class="t" style="left:471.50px;top:1037.00px;font-size:12.00px;line-height:14px;letter-spacing:0.154px;color:#333;">55</div>
<div class="abs" style="left:492px;top:1036px;width:771px;height:146px;border:1px solid #b9b9b8"></div>
<div class="abs" style="left:493px;top:1037px;width:769px;height:117px;background:#fff;"></div>
<div class="abs" style="left:493px;top:1037px;width:1px;height:117px;background:#9a9af6;"></div>
<svg style="left:0px;top:0px" width="1280" height="1406" viewBox="0 0 1280 1406"><path d="M493.5 1154v-106M495.5 1154v-21M496.5 1154v-21M498.5 1154v-11M499.5 1154v-36M501.5 1154v-74M502.5 1154v-62M503.5 1154v-11M505.5 1154v-38M506.5 1154v-43M507.5 1154v-9M509.5 1154v-15M510.5 1154v-15M511.5 1154v-40M512.5 1154v-57M513.5 1154v-32M515.5 1154v-36M516.5 1154v-26M517.5 1154v-57M518.5 1154v-49M519.5 1154v-30M520.5 1154v-23M522.5 1154v-60M523.5 1154v-17M524.5 1154v-19M528.5 1154v-13M529.5 1154v-36M530.5 1154v-57M531.5 1154v-40M532.5 1154v-30M533.5 1154v-13M536.5 1154v-40M538.5 1154v-21M539.5 1154v-47M540.5 1154v-34M541.5 1154v-57M542.5 1154v-17M544.5 1154v-9M547.5 1154v-9M550.5 1154v-30M551.5 1154v-15M552.5 1154v-11M553.5 1154v-72M554.5 1154v-11M555.5 1154v-28M558.5 1154v-36M559.5 1154v-21M560.5 1154v-53M562.5 1154v-28M563.5 1154v-43M565.5 1154v-83M566.5 1154v-53M568.5 1154v-9M572.5 1154v-72M573.5 1154v-85M574.5 1154v-13M577.5 1154v-83M578.5 1154v-55M580.5 1154v-81M581.5 1154v-13M582.5 1154v-28M583.5 1154v-17M584.5 1154v-38M587.5 1154v-36M588.5 1154v-77M589.5 1154v-36M591.5 1154v-47M592.5 1154v-30M593.5 1154v-15M596.5 1154v-19M598.5 1154v-19M599.5 1154v-72M600.5 1154v-21M601.5 1154v-19M604.5 1154v-19M605.5 1154v-43M606.5 1154v-55M608.5 1154v-15M609.5 1154v-21M610.5 1154v-72M611.5 1154v-21M612.5 1154v-21M613.5 1154v-79M614.5 1154v-68M615.5 1154v-83M618.5 1154v-13M620.5 1154v-57M622.5 1154v-36M623.5 1154v-66M624.5 1154v-19M625.5 1154v-38M626.5 1154v-17M628.5 1154v-34M629.5 1154v-9M630.5 1154v-47M632.5 1154v-60M636.5 1154v-11M637.5 1154v-81M640.5 1154v-53M643.5 1154v-9M644.5 1154v-55M646.5 1154v-30M647.5 1154v-21M648.5 1154v-11M649.5 1154v-11M653.5 1154v-28M655.5 1154v-17M659.5 1154v-38M660.5 1154v-64M661.5 1154v-19M662.5 1154v-21M663.5 1154v-70M664.5 1154v-51M665.5 1154v-9M668.5 1154v-11M670.5 1154v-51M674.5 1154v-19M676.5 1154v-74M678.5 1154v-17M680.5 1154v-21M682.5 1154v-15M684.5 1154v-9M685.5 1154v-23M686.5 1154v-51M687.5 1154v-45M688.5 1154v-64M689.5 1154v-34M690.5 1154v-77M691.5 1154v-36M692.5 1154v-30M693.5 1154v-49M694.5 1154v-53M698.5 1154v-30M699.5 1154v-51M700.5 1154v-9M701.5 1154v-47M702.5 1154v-34M703.5 1154v-9M705.5 1154v-26M706.5 1154v-17M707.5 1154v-53M708.5 1154v-36M711.5 1154v-21M715.5 1154v-51M717.5 1154v-19M719.5 1154v-32M720.5 1154v-19M721.5 1154v-72M724.5 1154v-21M726.5 1154v-64M727.5 1154v-30M728.5 1154v-30M729.5 1154v-9M730.5 1154v-15M732.5 1154v-30M734.5 1154v-36M735.5 1154v-57M737.5 1154v-32M738.5 1154v-19M742.5 1154v-32M745.5 1154v-17M746.5 1154v-81M747.5 1154v-85M748.5 1154v-34M749.5 1154v-28M750.5 1154v-9M751.5 1154v-19M752.5 1154v-26M753.5 1154v-23M754.5 1154v-45M758.5 1154v-13M759.5 1154v-72M763.5 1154v-13M765.5 1154v-79M766.5 1154v-21M767.5 1154v-9M769.5 1154v-21M770.5 1154v-38M773.5 1154v-32M774.5 1154v-34M776.5 1154v-72M777.5 1154v-17M778.5 1154v-57M779.5 1154v-11M781.5 1154v-60M782.5 1154v-53M783.5 1154v-34M784.5 1154v-32M785.5 1154v-11M787.5 1154v-36M789.5 1154v-45M791.5 1154v-15M792.5 1154v-77M793.5 1154v-13M795.5 1154v-40M797.5 1154v-45M799.5 1154v-66M801.5 1154v-26M803.5 1154v-47M805.5 1154v-28M808.5 1154v-32M809.5 1154v-13M810.5 1154v-60M812.5 1154v-32M816.5 1154v-83M817.5 1154v-85M818.5 1154v-32M819.5 1154v-23M820.5 1154v-15M824.5 1154v-64M825.5 1154v-17M826.5 1154v-45M828.5 1154v-32M830.5 1154v-62M831.5 1154v-53M835.5 1154v-26M836.5 1154v-15M837.5 1154v-40M838.5 1154v-15M840.5 1154v-77M841.5 1154v-13M842.5 1154v-85M843.5 1154v-19M844.5 1154v-66M845.5 1154v-55M846.5 1154v-43M847.5 1154v-28M850.5 1154v-9M852.5 1154v-32M853.5 1154v-68M856.5 1154v-45M858.5 1154v-51M859.5 1154v-51M861.5 1154v-21M862.5 1154v-38M866.5 1154v-43M867.5 1154v-74M869.5 1154v-60M871.5 1154v-55M872.5 1154v-15M875.5 1154v-60M876.5 1154v-45M878.5 1154v-64M879.5 1154v-38M880.5 1154v-13M882.5 1154v-38M884.5 1154v-38M885.5 1154v-28M886.5 1154v-11M887.5 1154v-51M890.5 1154v-15M891.5 1154v-68M892.5 1154v-17M893.5 1154v-70M895.5 1154v-9M896.5 1154v-28M897.5 1154v-72M900.5 1154v-57M902.5 1154v-21M905.5 1154v-64M906.5 1154v-60M909.5 1154v-72M911.5 1154v-30M912.5 1154v-38M913.5 1154v-17M914.5 1154v-38M916.5 1154v-17M919.5 1154v-62M920.5 1154v-34M921.5 1154v-23M922.5 1154v-40M923.5 1154v-45M924.5 1154v-19M926.5 1154v-13M927.5 1154v-45M929.5 1154v-11M930.5 1154v-19M931.5 1154v-23M933.5 1154v-47M935.5 1154v-32M937.5 1154v-79M938.5 1154v-32M939.5 1154v-83M941.5 1154v-62M942.5 1154v-38M943.5 1154v-28M945.5 1154v-66M947.5 1154v-9M950.5 1154v-57M952.5 1154v-21M953.5 1154v-30M954.5 1154v-57M956.5 1154v-45M957.5 1154v-32M958.5 1154v-28M959.5 1154v-26M961.5 1154v-23M962.5 1154v-51M963.5 1154v-9M965.5 1154v-21M966.5 1154v-13M967.5 1154v-9M968.5 1154v-17M970.5 1154v-117M971.5 1154v-23M972.5 1154v-32M976.5 1154v-55M977.5 1154v-9M978.5 1154v-43M979.5 1154v-32M980.5 1154v-30M982.5 1154v-13M984.5 1154v-21M985.5 1154v-13M986.5 1154v-23M987.5 1154v-15M988.5 1154v-30M989.5 1154v-34M990.5 1154v-47M991.5 1154v-13M995.5 1154v-53M996.5 1154v-40M997.5 1154v-28M998.5 1154v-23M999.5 1154v-30M1003.5 1154v-79M1004.5 1154v-68M1006.5 1154v-53M1007.5 1154v-72M1008.5 1154v-57M1009.5 1154v-49M1010.5 1154v-23M1012.5 1154v-9M1014.5 1154v-11M1017.5 1154v-53M1018.5 1154v-23M1019.5 1154v-55M1020.5 1154v-30M1021.5 1154v-64M1025.5 1154v-51M1026.5 1154v-40M1029.5 1154v-15M1030.5 1154v-15M1032.5 1154v-15M1033.5 1154v-30M1034.5 1154v-17M1035.5 1154v-43M1036.5 1154v-38M1037.5 1154v-28M1041.5 1154v-62M1042.5 1154v-28M1044.5 1154v-28M1046.5 1154v-13M1047.5 1154v-11M1048.5 1154v-28M1049.5 1154v-51M1050.5 1154v-17M1051.5 1154v-30M1055.5 1154v-17M1056.5 1154v-19M1057.5 1154v-53M1058.5 1154v-15M1060.5 1154v-53M1062.5 1154v-49M1064.5 1154v-66M1066.5 1154v-55M1070.5 1154v-38M1071.5 1154v-32M1072.5 1154v-32M1074.5 1154v-81M1075.5 1154v-13M1076.5 1154v-13M1077.5 1154v-17M1078.5 1154v-47M1079.5 1154v-11M1080.5 1154v-26M1081.5 1154v-21M1082.5 1154v-13M1083.5 1154v-81M1084.5 1154v-51M1085.5 1154v-15M1086.5 1154v-19M1087.5 1154v-51M1089.5 1154v-23M1090.5 1154v-60M1092.5 1154v-45M1093.5 1154v-62M1094.5 1154v-28M1095.5 1154v-11M1096.5 1154v-53M1097.5 1154v-55M1098.5 1154v-32M1100.5 1154v-28M1102.5 1154v-9M1104.5 1154v-19M1105.5 1154v-43M1108.5 1154v-74M1110.5 1154v-13M1112.5 1154v-51M1113.5 1154v-38M1114.5 1154v-23M1115.5 1154v-47M1117.5 1154v-30M1118.5 1154v-40M1119.5 1154v-19M1122.5 1154v-13M1123.5 1154v-19M1124.5 1154v-43M1125.5 1154v-34M1126.5 1154v-81M1128.5 1154v-34M1130.5 1154v-40M1134.5 1154v-11M1135.5 1154v-38M1136.5 1154v-55M1137.5 1154v-81M1138.5 1154v-26M1139.5 1154v-45M1140.5 1154v-40M1143.5 1154v-19M1145.5 1154v-21M1146.5 1154v-30M1147.5 1154v-51M1148.5 1154v-19M1149.5 1154v-23M1150.5 1154v-23M1151.5 1154v-68M1152.5 1154v-19M1153.5 1154v-26M1154.5 1154v-30M1155.5 1154v-21M1156.5 1154v-19M1157.5 1154v-55M1159.5 1154v-21M1161.5 1154v-77M1162.5 1154v-15M1164.5 1154v-55M1166.5 1154v-74M1168.5 1154v-13M1169.5 1154v-51M1170.5 1154v-77M1171.5 1154v-53M1172.5 1154v-38M1173.5 1154v-28M1177.5 1154v-77M1178.5 1154v-55M1179.5 1154v-15M1180.5 1154v-19M1181.5 1154v-62M1182.5 1154v-11M1183.5 1154v-57M1184.5 1154v-17M1185.5 1154v-85M1186.5 1154v-11M1187.5 1154v-11M1190.5 1154v-32M1192.5 1154v-9M1193.5 1154v-26M1196.5 1154v-57M1197.5 1154v-23M1198.5 1154v-32M1200.5 1154v-34M1202.5 1154v-36M1203.5 1154v-38M1204.5 1154v-9M1205.5 1154v-45M1206.5 1154v-28M1207.5 1154v-51M1208.5 1154v-28M1209.5 1154v-49M1212.5 1154v-55M1213.5 1154v-60M1214.5 1154v-43M1215.5 1154v-70M1216.5 1154v-57M1217.5 1154v-9M1219.5 1154v-55M1220.5 1154v-28M1221.5 1154v-49M1223.5 1154v-51M1224.5 1154v-11M1225.5 1154v-38M1226.5 1154v-66M1227.5 1154v-47M1230.5 1154v-45M1232.5 1154v-40M1233.5 1154v-83M1234.5 1154v-23M1238.5 1154v-21M1239.5 1154v-11M1241.5 1154v-11M1242.5 1154v-38M1243.5 1154v-21M1246.5 1154v-47M1247.5 1154v-28M1248.5 1154v-81M1249.5 1154v-68M1255.5 1154v-45M1256.5 1154v-62M1257.5 1154v-11M1258.5 1154v-21M1259.5 1154v-79M1260.5 1154v-11M1261.5 1154v-66" stroke="#5b5bfb" stroke-width="1" shape-rendering="crispEdges"/></svg>
<div class="abs" style="left:493px;top:1154px;width:769px;height:1px;background:#111;"></div>
<div class="t" style="left:493.00px;top:1163.00px;font-size:14.00px;line-height:16px;letter-spacing:0.206px;color:#111;">06:39:20.000</div>
<div class="abs" style="left:493px;top:1155px;width:1px;height:3px;background:#111;"></div>
<div class="t" style="left:646.60px;top:1163.00px;font-size:14.00px;line-height:16px;letter-spacing:0.206px;color:#111;">06:39:20.020</div>
<div class="abs" style="left:646px;top:1155px;width:1px;height:3px;background:#111;"></div>
<div class="t" style="left:800.20px;top:1163.00px;font-size:14.00px;line-height:16px;letter-spacing:0.206px;color:#111;">06:39:20.040</div>
<div class="abs" style="left:800px;top:1155px;width:1px;height:3px;background:#111;"></div>
<div class="t" style="left:953.80px;top:1163.00px;font-size:14.00px;line-height:16px;letter-spacing:0.206px;color:#111;">06:39:20.060</div>
<div class="abs" style="left:953px;top:1155px;width:1px;height:3px;background:#111;"></div>
<div class="t" style="left:1107.40px;top:1163.00px;font-size:14.00px;line-height:16px;letter-spacing:0.206px;color:#111;">06:39:20.080</div>
<div class="abs" style="left:1107px;top:1155px;width:1px;height:3px;background:#111;"></div>
<div class="abs" style="left:1261px;top:1155px;width:1px;height:3px;background:#111;"></div>
<div class="t" style="left:212.00px;top:1193.00px;font-size:12.00px;line-height:14px;letter-spacing:0.154px;color:#333;">88</div>
<div class="abs" style="left:233px;top:1192px;width:1037px;height:147px;border:1px solid #b9b9b8"></div>
<div class="abs" style="left:234px;top:1193px;width:1035px;height:118px;background:#fff;"></div>
<svg style="left:0px;top:0px" width="1280" height="1406" viewBox="0 0 1280 1406"><path d="M234.5 1311v-118M235.5 1311v-40M236.5 1311v-63M237.5 1311v-39M238.5 1311v-84M239.5 1311v-43M240.5 1311v-95M241.5 1311v-43M242.5 1311v-56M243.5 1311v-63M244.5 1311v-75M245.5 1311v-35M246.5 1311v-13M247.5 1311v-35M248.5 1311v-97M249.5 1311v-40M250.5 1311v-66M251.5 1311v-87M252.5 1311v-35M253.5 1311v-46M254.5 1311v-64M255.5 1311v-44M256.5 1311v-59M257.5 1311v-31M258.5 1311v-70M259.5 1311v-34M260.5 1311v-76M261.5 1311v-31M262.5 1311v-74M263.5 1311v-30M264.5 1311v-7M265.5 1311v-30M266.5 1311v-95M267.5 1311v-40M268.5 1311v-72M269.5 1311v-28M270.5 1311v-32M271.5 1311v-19M272.5 1311v-84M273.5 1311v-79M274.5 1311v-71M275.5 1311v-43M276.5 1311v-91M277.5 1311v-93M278.5 1311v-63M279.5 1311v-38M280.5 1311v-48M281.5 1311v-42M282.5 1311v-58M283.5 1311v-17M284.5 1311v-88M286.5 1311v-102M287.5 1311v-15M288.5 1311v-36M290.5 1311v-34M291.5 1311v-67M292.5 1311v-63M293.5 1311v-31M294.5 1311v-91M295.5 1311v-40M296.5 1311v-78M297.5 1311v-93M298.5 1311v-25M299.5 1311v-34M300.5 1311v-11M301.5 1311v-27M302.5 1311v-86M303.5 1311v-34M304.5 1311v-36M305.5 1311v-36M306.5 1311v-36M307.5 1311v-42M308.5 1311v-38M309.5 1311v-39M310.5 1311v-97M311.5 1311v-46M312.5 1311v-44M313.5 1311v-48M314.5 1311v-74M315.5 1311v-103M316.5 1311v-75M317.5 1311v-40M318.5 1311v-93M319.5 1311v-68M320.5 1311v-63M321.5 1311v-31M322.5 1311v-35M323.5 1311v-35M324.5 1311v-88M325.5 1311v-35M326.5 1311v-86M327.5 1311v-40M328.5 1311v-42M329.5 1311v-39M330.5 1311v-74M331.5 1311v-12M332.5 1311v-13M333.5 1311v-47M334.5 1311v-38M335.5 1311v-58M336.5 1311v-84M337.5 1311v-48M338.5 1311v-62M339.5 1311v-90M340.5 1311v-58M341.5 1311v-46M342.5 1311v-19M343.5 1311v-48M344.5 1311v-75M345.5 1311v-75M346.5 1311v-67M347.5 1311v-39M348.5 1311v-86M349.5 1311v-48M350.5 1311v-94M351.5 1311v-74M352.5 1311v-39M353.5 1311v-43M354.5 1311v-42M355.5 1311v-40M356.5 1311v-84M357.5 1311v-46M358.5 1311v-93M359.5 1311v-48M360.5 1311v-47M361.5 1311v-54M362.5 1311v-59M363.5 1311v-54M364.5 1311v-58M365.5 1311v-88M366.5 1311v-105M367.5 1311v-76M368.5 1311v-52M369.5 1311v-48M370.5 1311v-39M371.5 1311v-13M372.5 1311v-86M373.5 1311v-51M374.5 1311v-68M375.5 1311v-52M376.5 1311v-90M377.5 1311v-51M378.5 1311v-78M379.5 1311v-42M380.5 1311v-46M381.5 1311v-51M382.5 1311v-75M383.5 1311v-78M384.5 1311v-51M385.5 1311v-13M386.5 1311v-74M387.5 1311v-39M388.5 1311v-63M389.5 1311v-35M390.5 1311v-34M391.5 1311v-8M392.5 1311v-11M393.5 1311v-40M394.5 1311v-102M395.5 1311v-30M396.5 1311v-78M397.5 1311v-34M398.5 1311v-63M399.5 1311v-38M400.5 1311v-90M401.5 1311v-36M403.5 1311v-43M404.5 1311v-68M405.5 1311v-23M406.5 1311v-36M407.5 1311v-17M408.5 1311v-60M409.5 1311v-39M410.5 1311v-72M411.5 1311v-64M412.5 1311v-38M413.5 1311v-76M414.5 1311v-83M415.5 1311v-76M416.5 1311v-76M417.5 1311v-63M418.5 1311v-39M419.5 1311v-32M420.5 1311v-94M421.5 1311v-31M422.5 1311v-76M423.5 1311v-34M424.5 1311v-20M425.5 1311v-12M426.5 1311v-12M427.5 1311v-7M428.5 1311v-56M429.5 1311v-46M430.5 1311v-44M431.5 1311v-46M432.5 1311v-95M433.5 1311v-21M435.5 1311v-52M436.5 1311v-93M437.5 1311v-50M438.5 1311v-46M439.5 1311v-42M440.5 1311v-91M441.5 1311v-46M442.5 1311v-8M443.5 1311v-43M444.5 1311v-82M445.5 1311v-34M446.5 1311v-35M447.5 1311v-35M448.5 1311v-27M449.5 1311v-34M450.5 1311v-88M451.5 1311v-11M452.5 1311v-66M453.5 1311v-38M454.5 1311v-43M455.5 1311v-44M456.5 1311v-35M457.5 1311v-46M458.5 1311v-110M459.5 1311v-42M460.5 1311v-97M461.5 1311v-46M462.5 1311v-80M464.5 1311v-15M466.5 1311v-9M467.5 1311v-82M468.5 1311v-86M469.5 1311v-42M470.5 1311v-95M471.5 1311v-93M472.5 1311v-95M473.5 1311v-40M474.5 1311v-13M475.5 1311v-40M476.5 1311v-60M477.5 1311v-39M478.5 1311v-94M479.5 1311v-44M480.5 1311v-67M481.5 1311v-46M482.5 1311v-97M483.5 1311v-42M484.5 1311v-91M485.5 1311v-47M486.5 1311v-83M487.5 1311v-42M489.5 1311v-9M490.5 1311v-36M491.5 1311v-28M492.5 1311v-67M493.5 1311v-27M494.5 1311v-75M495.5 1311v-32M496.5 1311v-11M497.5 1311v-28M498.5 1311v-86M499.5 1311v-60M500.5 1311v-19M501.5 1311v-12M502.5 1311v-88M503.5 1311v-43M504.5 1311v-78M505.5 1311v-43M506.5 1311v-60M507.5 1311v-59M508.5 1311v-83M509.5 1311v-40M510.5 1311v-99M511.5 1311v-46M512.5 1311v-9M513.5 1311v-70M514.5 1311v-60M515.5 1311v-48M516.5 1311v-50M517.5 1311v-48M518.5 1311v-68M519.5 1311v-54M520.5 1311v-71M521.5 1311v-47M522.5 1311v-64M523.5 1311v-50M524.5 1311v-51M525.5 1311v-19M526.5 1311v-43M527.5 1311v-76M528.5 1311v-95M529.5 1311v-27M530.5 1311v-105M531.5 1311v-86M532.5 1311v-98M533.5 1311v-34M534.5 1311v-64M535.5 1311v-35M536.5 1311v-70M537.5 1311v-35M538.5 1311v-84M539.5 1311v-39M540.5 1311v-43M541.5 1311v-50M542.5 1311v-52M543.5 1311v-50M544.5 1311v-84M545.5 1311v-46M546.5 1311v-86M547.5 1311v-36M548.5 1311v-72M549.5 1311v-27M550.5 1311v-60M551.5 1311v-36M552.5 1311v-74M553.5 1311v-36M554.5 1311v-63M555.5 1311v-17M556.5 1311v-64M558.5 1311v-86M559.5 1311v-54M560.5 1311v-67M561.5 1311v-46M562.5 1311v-94M563.5 1311v-5M564.5 1311v-47M565.5 1311v-43M566.5 1311v-67M567.5 1311v-40M568.5 1311v-75M569.5 1311v-47M570.5 1311v-79M571.5 1311v-42M572.5 1311v-47M573.5 1311v-54M574.5 1311v-94M575.5 1311v-36M576.5 1311v-43M577.5 1311v-36M578.5 1311v-101M579.5 1311v-38M580.5 1311v-39M581.5 1311v-36M582.5 1311v-39M583.5 1311v-34M584.5 1311v-32M585.5 1311v-38M586.5 1311v-90M587.5 1311v-34M588.5 1311v-75M589.5 1311v-43M590.5 1311v-72M591.5 1311v-42M592.5 1311v-4M593.5 1311v-39M594.5 1311v-79M595.5 1311v-95M596.5 1311v-80M597.5 1311v-39M598.5 1311v-70M599.5 1311v-35M600.5 1311v-86M601.5 1311v-35M602.5 1311v-11M603.5 1311v-30M604.5 1311v-60M605.5 1311v-30M606.5 1311v-90M607.5 1311v-82M608.5 1311v-88M609.5 1311v-35M610.5 1311v-82M611.5 1311v-35M612.5 1311v-88M613.5 1311v-39M614.5 1311v-40M615.5 1311v-38M616.5 1311v-70M617.5 1311v-38M618.5 1311v-76M619.5 1311v-40M620.5 1311v-87M621.5 1311v-38M622.5 1311v-62M623.5 1311v-38M624.5 1311v-20M625.5 1311v-21M626.5 1311v-8M627.5 1311v-66M628.5 1311v-11M629.5 1311v-40M630.5 1311v-60M631.5 1311v-93M632.5 1311v-79M633.5 1311v-50M634.5 1311v-48M635.5 1311v-88M636.5 1311v-42M637.5 1311v-48M638.5 1311v-94M639.5 1311v-63M640.5 1311v-47M641.5 1311v-44M642.5 1311v-11M643.5 1311v-47M644.5 1311v-64M645.5 1311v-71M646.5 1311v-76M647.5 1311v-42M648.5 1311v-5M649.5 1311v-40M650.5 1311v-48M651.5 1311v-43M652.5 1311v-17M653.5 1311v-46M654.5 1311v-95M655.5 1311v-42M656.5 1311v-79M657.5 1311v-40M658.5 1311v-93M659.5 1311v-84M660.5 1311v-15M661.5 1311v-30M662.5 1311v-75M663.5 1311v-31M664.5 1311v-58M665.5 1311v-28M666.5 1311v-72M667.5 1311v-93M668.5 1311v-20M669.5 1311v-36M670.5 1311v-86M671.5 1311v-36M672.5 1311v-42M673.5 1311v-54M674.5 1311v-66M675.5 1311v-39M676.5 1311v-50M677.5 1311v-46M678.5 1311v-74M679.5 1311v-47M680.5 1311v-94M681.5 1311v-44M682.5 1311v-93M683.5 1311v-20M684.5 1311v-75M685.5 1311v-48M686.5 1311v-82M687.5 1311v-40M688.5 1311v-84M689.5 1311v-48M690.5 1311v-7M691.5 1311v-46M692.5 1311v-59M693.5 1311v-39M694.5 1311v-63M695.5 1311v-42M696.5 1311v-83M697.5 1311v-35M698.5 1311v-93M699.5 1311v-16M700.5 1311v-95M701.5 1311v-44M702.5 1311v-80M703.5 1311v-19M704.5 1311v-67M705.5 1311v-9M706.5 1311v-63M707.5 1311v-43M708.5 1311v-86M709.5 1311v-50M710.5 1311v-78M711.5 1311v-47M712.5 1311v-46M713.5 1311v-50M714.5 1311v-13M715.5 1311v-42M716.5 1311v-46M717.5 1311v-47M718.5 1311v-87M719.5 1311v-46M720.5 1311v-64M721.5 1311v-39M722.5 1311v-84M723.5 1311v-34M724.5 1311v-56M725.5 1311v-36M726.5 1311v-105M727.5 1311v-34M728.5 1311v-87M729.5 1311v-84M730.5 1311v-80M731.5 1311v-15M732.5 1311v-88M733.5 1311v-7M734.5 1311v-20M735.5 1311v-38M736.5 1311v-71M737.5 1311v-38M738.5 1311v-87M739.5 1311v-74M740.5 1311v-66M741.5 1311v-71M742.5 1311v-75M743.5 1311v-48M744.5 1311v-8M745.5 1311v-15M746.5 1311v-75M747.5 1311v-39M748.5 1311v-44M749.5 1311v-72M750.5 1311v-70M751.5 1311v-38M752.5 1311v-34M753.5 1311v-35M754.5 1311v-87M755.5 1311v-28M756.5 1311v-63M757.5 1311v-13M758.5 1311v-74M759.5 1311v-44M760.5 1311v-88M761.5 1311v-43M762.5 1311v-56M763.5 1311v-12M764.5 1311v-47M765.5 1311v-11M766.5 1311v-94M767.5 1311v-51M768.5 1311v-39M769.5 1311v-39M770.5 1311v-91M771.5 1311v-39M772.5 1311v-72M773.5 1311v-62M774.5 1311v-68M775.5 1311v-38M776.5 1311v-9M777.5 1311v-44M778.5 1311v-64M779.5 1311v-44M780.5 1311v-91M782.5 1311v-82M783.5 1311v-82M784.5 1311v-56M785.5 1311v-52M786.5 1311v-44M787.5 1311v-44M788.5 1311v-43M789.5 1311v-16M790.5 1311v-74M791.5 1311v-71M792.5 1311v-83M793.5 1311v-39M794.5 1311v-83M795.5 1311v-70M796.5 1311v-79M797.5 1311v-44M798.5 1311v-71M799.5 1311v-88M800.5 1311v-79M801.5 1311v-47M802.5 1311v-70M803.5 1311v-46M804.5 1311v-8M805.5 1311v-46M806.5 1311v-42M807.5 1311v-46M808.5 1311v-39M809.5 1311v-35M810.5 1311v-67M811.5 1311v-34M812.5 1311v-30M813.5 1311v-76M814.5 1311v-111M815.5 1311v-8M816.5 1311v-8M817.5 1311v-78M818.5 1311v-76M819.5 1311v-48M820.5 1311v-90M821.5 1311v-44M822.5 1311v-42M823.5 1311v-43M824.5 1311v-23M825.5 1311v-36M826.5 1311v-13M827.5 1311v-38M828.5 1311v-86M829.5 1311v-9M830.5 1311v-63M831.5 1311v-75M832.5 1311v-101M833.5 1311v-39M834.5 1311v-63M835.5 1311v-35M836.5 1311v-76M837.5 1311v-43M838.5 1311v-84M839.5 1311v-47M840.5 1311v-50M841.5 1311v-40M842.5 1311v-16M843.5 1311v-48M844.5 1311v-71M845.5 1311v-8M846.5 1311v-79M847.5 1311v-32M848.5 1311v-12M849.5 1311v-31M850.5 1311v-42M851.5 1311v-101M852.5 1311v-67M853.5 1311v-35M854.5 1311v-58M855.5 1311v-38M856.5 1311v-88M858.5 1311v-80M859.5 1311v-40M860.5 1311v-15M861.5 1311v-31M862.5 1311v-60M863.5 1311v-13M864.5 1311v-86M865.5 1311v-30M866.5 1311v-9M867.5 1311v-13M868.5 1311v-83M869.5 1311v-91M870.5 1311v-63M871.5 1311v-34M872.5 1311v-38M873.5 1311v-38M874.5 1311v-58M875.5 1311v-38M876.5 1311v-94M877.5 1311v-38M878.5 1311v-42M879.5 1311v-4M880.5 1311v-78M881.5 1311v-36M882.5 1311v-93M883.5 1311v-23M884.5 1311v-78M885.5 1311v-42M886.5 1311v-88M887.5 1311v-40M888.5 1311v-94M889.5 1311v-34M890.5 1311v-30M891.5 1311v-36M892.5 1311v-71M893.5 1311v-44M894.5 1311v-11M895.5 1311v-21M896.5 1311v-60M897.5 1311v-47M899.5 1311v-52M900.5 1311v-76M901.5 1311v-50M902.5 1311v-76M903.5 1311v-51M904.5 1311v-44M905.5 1311v-43M906.5 1311v-35M907.5 1311v-34M908.5 1311v-28M909.5 1311v-38M910.5 1311v-67M911.5 1311v-36M912.5 1311v-70M913.5 1311v-82M914.5 1311v-8M915.5 1311v-44M916.5 1311v-46M917.5 1311v-44M918.5 1311v-90M919.5 1311v-51M920.5 1311v-71M921.5 1311v-47M922.5 1311v-58M923.5 1311v-46M924.5 1311v-110M925.5 1311v-48M926.5 1311v-9M927.5 1311v-44M928.5 1311v-107M929.5 1311v-39M930.5 1311v-90M931.5 1311v-44M932.5 1311v-40M933.5 1311v-32M934.5 1311v-35M935.5 1311v-19M936.5 1311v-78M937.5 1311v-9M938.5 1311v-5M939.5 1311v-35M940.5 1311v-66M941.5 1311v-35M942.5 1311v-93M943.5 1311v-87M944.5 1311v-70M945.5 1311v-27M946.5 1311v-71M947.5 1311v-36M948.5 1311v-95M949.5 1311v-36M950.5 1311v-8M951.5 1311v-34M952.5 1311v-70M953.5 1311v-38M954.5 1311v-84M955.5 1311v-83M956.5 1311v-60M957.5 1311v-43M958.5 1311v-97M959.5 1311v-47M960.5 1311v-88M961.5 1311v-47M962.5 1311v-42M963.5 1311v-39M964.5 1311v-38M965.5 1311v-39M966.5 1311v-67M968.5 1311v-39M969.5 1311v-40M970.5 1311v-86M971.5 1311v-28M972.5 1311v-67M973.5 1311v-31M974.5 1311v-16M975.5 1311v-12M976.5 1311v-93M977.5 1311v-30M978.5 1311v-35M979.5 1311v-32M980.5 1311v-109M981.5 1311v-30M982.5 1311v-16M983.5 1311v-36M984.5 1311v-27M985.5 1311v-35M986.5 1311v-75M987.5 1311v-38M988.5 1311v-42M989.5 1311v-35M990.5 1311v-43M991.5 1311v-44M992.5 1311v-75M993.5 1311v-40M994.5 1311v-42M995.5 1311v-36M996.5 1311v-102M997.5 1311v-16M998.5 1311v-17M999.5 1311v-19M1000.5 1311v-19M1001.5 1311v-91M1002.5 1311v-55M1003.5 1311v-44M1004.5 1311v-78M1005.5 1311v-87M1006.5 1311v-60M1007.5 1311v-59M1008.5 1311v-87M1009.5 1311v-44M1010.5 1311v-74M1011.5 1311v-52M1012.5 1311v-106M1013.5 1311v-44M1014.5 1311v-80M1015.5 1311v-44M1016.5 1311v-62M1017.5 1311v-43M1018.5 1311v-94M1019.5 1311v-68M1020.5 1311v-20M1021.5 1311v-90M1022.5 1311v-60M1023.5 1311v-36M1024.5 1311v-21M1025.5 1311v-36M1026.5 1311v-93M1027.5 1311v-38M1028.5 1311v-71M1029.5 1311v-36M1030.5 1311v-91M1031.5 1311v-36M1032.5 1311v-78M1033.5 1311v-5M1034.5 1311v-68M1035.5 1311v-19M1036.5 1311v-56M1037.5 1311v-42M1038.5 1311v-94M1039.5 1311v-48M1040.5 1311v-80M1041.5 1311v-50M1042.5 1311v-103M1043.5 1311v-66M1044.5 1311v-46M1045.5 1311v-44M1046.5 1311v-99M1047.5 1311v-50M1048.5 1311v-68M1049.5 1311v-46M1050.5 1311v-103M1051.5 1311v-43M1052.5 1311v-47M1053.5 1311v-94M1054.5 1311v-56M1055.5 1311v-44M1056.5 1311v-44M1057.5 1311v-87M1059.5 1311v-39M1060.5 1311v-60M1061.5 1311v-34M1062.5 1311v-90M1063.5 1311v-30M1064.5 1311v-68M1065.5 1311v-40M1066.5 1311v-72M1067.5 1311v-32M1068.5 1311v-31M1069.5 1311v-74M1070.5 1311v-21M1071.5 1311v-38M1072.5 1311v-103M1073.5 1311v-31M1074.5 1311v-64M1075.5 1311v-11M1076.5 1311v-76M1077.5 1311v-39M1078.5 1311v-79M1079.5 1311v-38M1080.5 1311v-8M1081.5 1311v-17M1082.5 1311v-83M1083.5 1311v-40M1084.5 1311v-12M1085.5 1311v-46M1086.5 1311v-48M1087.5 1311v-43M1088.5 1311v-103M1089.5 1311v-46M1090.5 1311v-84M1091.5 1311v-43M1092.5 1311v-94M1093.5 1311v-35M1094.5 1311v-36M1095.5 1311v-15M1096.5 1311v-60M1097.5 1311v-40M1098.5 1311v-39M1099.5 1311v-40M1100.5 1311v-9M1101.5 1311v-34M1102.5 1311v-83M1103.5 1311v-34M1104.5 1311v-83M1105.5 1311v-28M1106.5 1311v-67M1107.5 1311v-27M1108.5 1311v-39M1109.5 1311v-34M1110.5 1311v-15M1111.5 1311v-44M1112.5 1311v-39M1113.5 1311v-94M1114.5 1311v-38M1115.5 1311v-40M1116.5 1311v-21M1117.5 1311v-43M1118.5 1311v-66M1119.5 1311v-94M1120.5 1311v-109M1121.5 1311v-38M1122.5 1311v-39M1123.5 1311v-34M1124.5 1311v-5M1125.5 1311v-79M1126.5 1311v-20M1127.5 1311v-46M1128.5 1311v-78M1129.5 1311v-40M1130.5 1311v-64M1131.5 1311v-42M1132.5 1311v-75M1133.5 1311v-42M1134.5 1311v-68M1135.5 1311v-51M1136.5 1311v-51M1137.5 1311v-50M1138.5 1311v-38M1139.5 1311v-44M1140.5 1311v-16M1141.5 1311v-51M1142.5 1311v-76M1143.5 1311v-60M1144.5 1311v-42M1145.5 1311v-90M1146.5 1311v-79M1147.5 1311v-38M1148.5 1311v-88M1149.5 1311v-43M1150.5 1311v-86M1151.5 1311v-38M1152.5 1311v-76M1153.5 1311v-40M1154.5 1311v-91M1155.5 1311v-66M1156.5 1311v-34M1157.5 1311v-16M1158.5 1311v-76M1159.5 1311v-43M1160.5 1311v-68M1161.5 1311v-46M1162.5 1311v-47M1163.5 1311v-87M1164.5 1311v-72M1165.5 1311v-44M1166.5 1311v-48M1167.5 1311v-40M1168.5 1311v-47M1169.5 1311v-47M1170.5 1311v-67M1171.5 1311v-39M1172.5 1311v-39M1173.5 1311v-42M1174.5 1311v-109M1175.5 1311v-20M1176.5 1311v-48M1177.5 1311v-51M1178.5 1311v-84M1179.5 1311v-7M1180.5 1311v-20M1181.5 1311v-52M1182.5 1311v-87M1183.5 1311v-21M1184.5 1311v-63M1185.5 1311v-68M1186.5 1311v-78M1187.5 1311v-43M1188.5 1311v-110M1189.5 1311v-5M1190.5 1311v-86M1191.5 1311v-32M1192.5 1311v-79M1193.5 1311v-43M1194.5 1311v-80M1195.5 1311v-39M1196.5 1311v-44M1197.5 1311v-87M1198.5 1311v-63M1199.5 1311v-34M1200.5 1311v-64M1201.5 1311v-42M1202.5 1311v-80M1203.5 1311v-40M1204.5 1311v-80M1205.5 1311v-47M1206.5 1311v-70M1207.5 1311v-47M1208.5 1311v-75M1209.5 1311v-44M1210.5 1311v-52M1211.5 1311v-43M1212.5 1311v-95M1213.5 1311v-17M1214.5 1311v-97M1215.5 1311v-43M1216.5 1311v-83M1217.5 1311v-42M1218.5 1311v-43M1219.5 1311v-34M1220.5 1311v-67M1221.5 1311v-39M1222.5 1311v-76M1223.5 1311v-46M1224.5 1311v-90M1225.5 1311v-35M1226.5 1311v-43M1227.5 1311v-21M1228.5 1311v-72M1229.5 1311v-38M1230.5 1311v-67M1231.5 1311v-38M1232.5 1311v-64M1233.5 1311v-44M1234.5 1311v-39M1235.5 1311v-43M1236.5 1311v-44M1237.5 1311v-19M1238.5 1311v-66M1239.5 1311v-76M1240.5 1311v-35M1241.5 1311v-39M1242.5 1311v-5M1243.5 1311v-34M1244.5 1311v-46M1245.5 1311v-38M1246.5 1311v-19M1247.5 1311v-39M1248.5 1311v-102M1249.5 1311v-40M1250.5 1311v-44M1251.5 1311v-47M1252.5 1311v-13M1253.5 1311v-34M1254.5 1311v-63M1255.5 1311v-16M1256.5 1311v-38M1257.5 1311v-34M1258.5 1311v-63M1259.5 1311v-42M1260.5 1311v-93M1262.5 1311v-39M1263.5 1311v-43M1264.5 1311v-67M1265.5 1311v-36M1266.5 1311v-40M1267.5 1311v-40M1268.5 1311v-64" stroke="#5b5bfb" stroke-width="1" shape-rendering="crispEdges"/></svg>
<div class="abs" style="left:234px;top:1311px;width:1035px;height:1px;background:#111;"></div>
<div class="t" style="left:234.00px;top:1320.00px;font-size:14.00px;line-height:16px;letter-spacing:0.206px;color:#111;">06:39:20.000</div>
<div class="abs" style="left:234px;top:1312px;width:1px;height:3px;background:#111;"></div>
<div class="t" style="left:337.38px;top:1320.00px;font-size:14.00px;line-height:16px;letter-spacing:0.206px;color:#111;">06:39:20.050</div>
<div class="abs" style="left:337px;top:1312px;width:1px;height:3px;background:#111;"></div>
<div class="t" style="left:440.76px;top:1320.00px;font-size:14.00px;line-height:16px;letter-spacing:0.206px;color:#111;">06:39:20.100</div>
<div class="abs" style="left:441px;top:1312px;width:1px;height:3px;background:#111;"></div>
<div class="t" style="left:544.14px;top:1320.00px;font-size:14.00px;line-height:16px;letter-spacing:0.206px;color:#111;">06:39:20.150</div>
<div class="abs" style="left:544px;top:1312px;width:1px;height:3px;background:#111;"></div>
<div class="t" style="left:647.52px;top:1320.00px;font-size:14.00px;line-height:16px;letter-spacing:0.206px;color:#111;">06:39:20.200</div>
<div class="abs" style="left:648px;top:1312px;width:1px;height:3px;background:#111;"></div>
<div class="t" style="left:750.90px;top:1320.00px;font-size:14.00px;line-height:16px;letter-spacing:0.206px;color:#111;">06:39:20.250</div>
<div class="abs" style="left:751px;top:1312px;width:1px;height:3px;background:#111;"></div>
<div class="t" style="left:854.28px;top:1320.00px;font-size:14.00px;line-height:16px;letter-spacing:0.206px;color:#111;">06:39:20.300</div>
<div class="abs" style="left:854px;top:1312px;width:1px;height:3px;background:#111;"></div>
<div class="t" style="left:957.66px;top:1320.00px;font-size:14.00px;line-height:16px;letter-spacing:0.206px;color:#111;">06:39:20.350</div>
<div class="abs" style="left:958px;top:1312px;width:1px;height:3px;background:#111;"></div>
<div class="t" style="left:1061.04px;top:1320.00px;font-size:14.00px;line-height:16px;letter-spacing:0.206px;color:#111;">06:39:20.400</div>
<div class="abs" style="left:1061px;top:1312px;width:1px;height:3px;background:#111;"></div>
<div class="t" style="left:1164.42px;top:1320.00px;font-size:14.00px;line-height:16px;letter-spacing:0.206px;color:#111;">06:39:20.450</div>
<div class="abs" style="left:1164px;top:1312px;width:1px;height:3px;background:#111;"></div>
<div class="abs" style="left:1268px;top:1312px;width:1px;height:3px;background:#111;"></div>
<div class="abs" style="left:234px;top:1193px;width:208px;height:118px;background:rgba(255,150,40,.17);border:1px solid #f28a1c;border-radius:7px"></div>
<div class="abs" style="left:317px;top:1252px;width:41px;height:1px;background:#f28a1c;"></div>
<div class="abs" style="left:337px;top:1232px;width:1px;height:41px;background:#f28a1c;"></div>
<div class="abs" style="left:206px;top:1350px;width:16px;height:16px;background:#5b5bfb;border:1px solid #111"></div>
<div class="t" style="left:227.00px;top:1351.00px;font-size:14.00px;line-height:16px;letter-spacing:0.383px;color:#333;">20140219-123819.btf</div>
<svg style="left:3px;top:1380px" width="16" height="16" viewBox="0 0 16 16"><rect x="0" y="0" width="16" height="16" fill="#fff"/><text x=".3" y="11" font-family="Liberation Sans" font-size="9.700" fill="#3aa030" textLength="15.200" lengthAdjust="spacingAndGlyphs">BTF</text></svg>
<div class="t" style="left:24.00px;top:1381.00px;font-size:14.00px;line-height:16px;letter-spacing:0.438px;color:#2a2a2a;">20140219-123819.btf</div>
<div class="abs" style="left:783px;top:1380px;width:2px;height:22px;background:repeating-linear-gradient(#cbbfa8 0 3px,transparent 3px 6px)"></div>
<div class="abs" style="left:787px;top:1375px;width:171px;height:31px;background:#ebebea;border-top:1px solid #b2b2b1;border-left:1px solid #b2b2b1"></div>
<div class="abs" style="left:788px;top:1376px;width:90px;height:28px;background:#a6a6a5;"></div>
<div class="abs" style="left:940px;top:1376px;width:1px;height:28px;background:#8e8e8d;"></div>
<div class="abs" style="left:787px;top:1404px;width:171px;height:2px;background:#fdfdfd;"></div>
<div class="t" style="left:814.00px;top:1383.00px;font-size:14.00px;line-height:16px;letter-spacing:0.394px;color:#2e2e2e;">624M of 1054M</div>
<svg style="left:942px;top:1382px" width="14" height="16" viewBox="0 0 14 16"><path d="M2.500 3.500h9l-.8 12H3.300z" fill="#b8ccf2" stroke="#4a68b0" stroke-width="1"/><path d="M1 3h12M5 1.500h4" stroke="#4a68b0" stroke-width="1.200"/><path d="M5 5.500v8.500M7 5.500v8.500M9 5.500v8.500" stroke="#3a58a8" stroke-width="1"/></svg>
<div class="abs" style="left:959px;top:1380px;width:2px;height:22px;background:repeating-linear-gradient(#cbbfa8 0 3px,transparent 3px 6px)"></div>
</body></html>
